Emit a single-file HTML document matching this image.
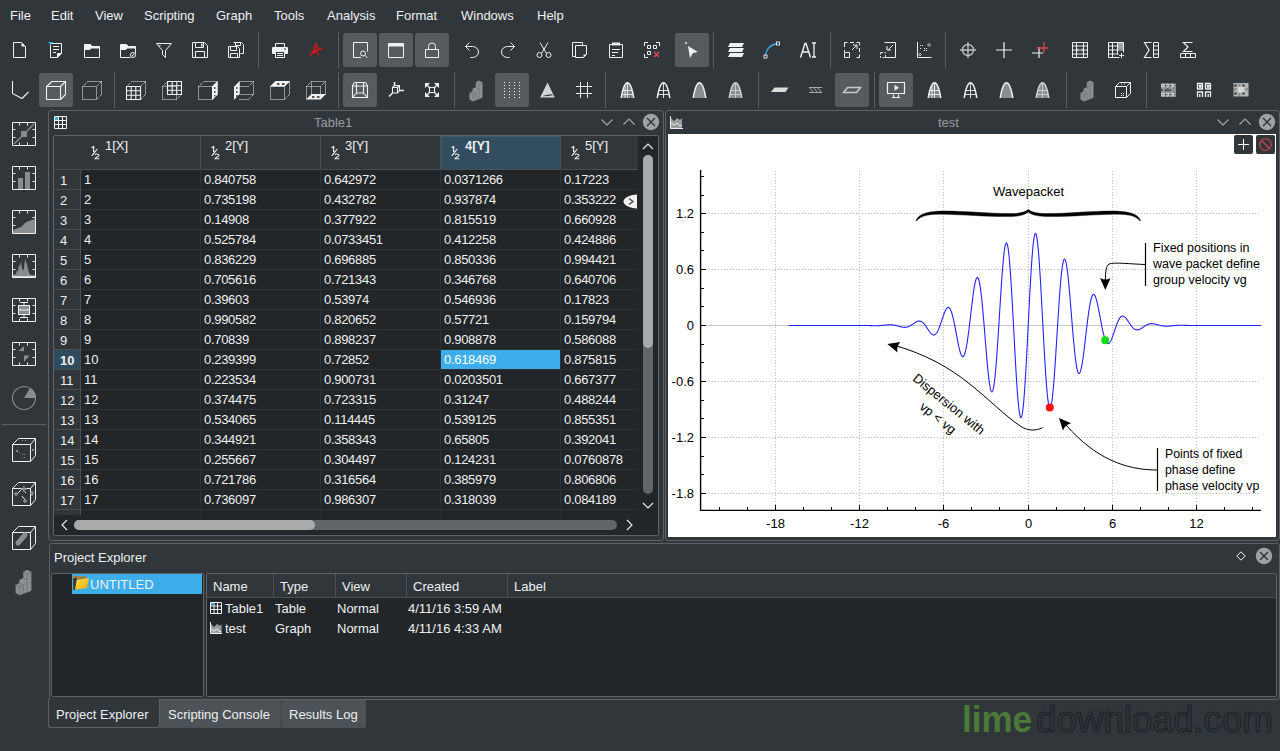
<!DOCTYPE html><html><head><meta charset="utf-8"><style>
*{box-sizing:border-box}
html,body{margin:0;padding:0}
body{width:1280px;height:751px;overflow:hidden;background:#31363b;font-family:"Liberation Sans",sans-serif;font-size:13px;color:#eff0f1;position:relative}
.abs{position:absolute}
.t{position:absolute;white-space:nowrap;line-height:15px}
svg{position:absolute;overflow:visible}
.chk{position:absolute;width:34px;height:34px;border-radius:3px;background:#575b5f}
.sep{position:absolute;width:1px;background:#5b5f63}
</style></head><body>
<div class="t" style="left:10px;top:8px">File</div><div class="t" style="left:51px;top:8px">Edit</div><div class="t" style="left:95px;top:8px">View</div><div class="t" style="left:144px;top:8px">Scripting</div><div class="t" style="left:216px;top:8px">Graph</div><div class="t" style="left:274px;top:8px">Tools</div><div class="t" style="left:327px;top:8px">Analysis</div><div class="t" style="left:396px;top:8px">Format</div><div class="t" style="left:461px;top:8px">Windows</div><div class="t" style="left:537px;top:8px">Help</div><div class="chk" style="left:343px;top:33px"></div><div class="chk" style="left:379px;top:33px"></div><div class="chk" style="left:415px;top:33px"></div><div class="chk" style="left:675px;top:33px"></div><div class="sep" style="left:258px;top:32px;height:36px"></div><div class="sep" style="left:338px;top:32px;height:36px"></div><div class="sep" style="left:713px;top:32px;height:36px"></div><div class="sep" style="left:830px;top:32px;height:36px"></div><div class="sep" style="left:945px;top:32px;height:36px"></div><svg style="left:12px;top:42px" width="16" height="16" viewBox="0 0 16 16"><path d="M1.5 0.5h8l4 4v11h-12z" fill="none" stroke="#eff0f1"/><path d="M9.5 0.5v4h4z" fill="#eff0f1"/></svg><svg style="left:48px;top:42px" width="16" height="16" viewBox="0 0 16 16"><path d="M2.5 1.5h11v10l-4 4h-7z" fill="none" stroke="#eff0f1"/><path d="M9.5 15.5v-4h4" fill="#eff0f1" stroke="#eff0f1"/><path d="M5 4.5h6M5 7.5h6M5 10.5h3" stroke="#eff0f1"/><path d="M0 0h5l-2.5 3z" fill="#3daee9"/></svg><svg style="left:84px;top:42px" width="16" height="16" viewBox="0 0 16 16"><path d="M0.5 2.5h6l2 2h7v11h-15z" fill="none" stroke="#eff0f1"/><path d="M0.5 2.5h6l2 2h7v2h-8l-2 1.5h-5z" fill="#eff0f1"/></svg><svg style="left:120px;top:42px" width="16" height="16" viewBox="0 0 16 16"><path d="M0.5 2.5h6l2 2h7v7M10.5 15.5h-10v-13" fill="none" stroke="#eff0f1"/><path d="M0.5 2.5h6l2 2h7v2h-8l-2 1.5h-5z" fill="#eff0f1"/><circle cx="13" cy="13" r="2.5" fill="none" stroke="#eff0f1"/><path d="M11.5 14.5l3-3" stroke="#eff0f1"/></svg><svg style="left:156px;top:42px" width="16" height="16" viewBox="0 0 16 16"><path d="M0.5 1.5h15l-6 7v7l-3-3v-4z" fill="none" stroke="#eff0f1"/><path d="M2 3h3l-1 1z" fill="#eff0f1"/></svg><svg style="left:192px;top:42px" width="16" height="16" viewBox="0 0 16 16"><path d="M0.5 0.5h12l3 3v12h-15z" fill="none" stroke="#eff0f1"/><path d="M3.5 0.5v5h8v-5M3.5 15.5v-6h9v6" fill="none" stroke="#eff0f1"/><path d="M9 1.5h1.5v3h-1.5z" fill="#eff0f1"/></svg><svg style="left:228px;top:42px" width="16" height="16" viewBox="0 0 16 16"><path d="M5.5 0.5h8l2 2v9h-3" fill="none" stroke="#eff0f1"/><path d="M0.5 4.5h9l2 2v9h-11z" fill="none" stroke="#eff0f1"/><path d="M2.5 4.5v4h6v-4M2.5 15.5v-4h7v4" fill="none" stroke="#eff0f1"/><path d="M7.5 0.5v3h5v-3" fill="none" stroke="#eff0f1"/></svg><svg style="left:272px;top:42px" width="16" height="16" viewBox="0 0 16 16"><path d="M3.5 1.5h9v4h-9z" fill="none" stroke="#eff0f1"/><path d="M0.5 5.5h15v6h-15z" fill="#eff0f1" stroke="#eff0f1"/><path d="M3.5 9.5h9v6h-9z" fill="#31363b" stroke="#eff0f1"/><path d="M5 11.5h6M5 13.5h6" stroke="#eff0f1"/><path d="M12 7h2" stroke="#31363b"/></svg><svg style="left:308px;top:42px" width="16" height="16" viewBox="0 0 16 16"><path d="M8 1c-1 3 0 6 -6 13M8 1c1 4 2 7 7 6M15 7c-5 0 -9 2 -13 7M6 6c1 3 3 5 5 7" fill="none" stroke="#c8171d" stroke-width="1.6"/></svg><svg style="left:352px;top:42px" width="16" height="16" viewBox="0 0 16 16"><path d="M8.5 15.5h-7.5v-15h14v9" fill="none" stroke="#eff0f1" transform="translate(0.5 0)"/><circle cx="11" cy="11.5" r="2.5" fill="none" stroke="#eff0f1"/><path d="M12.8 13.3l2.5 2.5" stroke="#eff0f1"/></svg><svg style="left:388px;top:42px" width="16" height="16" viewBox="0 0 16 16"><path d="M0.5 1.5h15v14h-15z" fill="none" stroke="#eff0f1"/><path d="M0.5 1.5h15v3h-15z" fill="#eff0f1"/></svg><svg style="left:424px;top:42px" width="16" height="16" viewBox="0 0 16 16"><path d="M1.5 7.5h13v8h-13z" fill="none" stroke="#eff0f1"/><path d="M4.5 7.5v-3a3.5 3.5 0 0 1 7 0v3" fill="none" stroke="#eff0f1"/></svg><svg style="left:464px;top:42px" width="16" height="16" viewBox="0 0 16 16"><path d="M5.5 0.5l-4 4 4 4" fill="none" stroke="#eff0f1"/><path d="M1.5 4.5h7a6 5.5 0 0 1 0 11h-2" fill="none" stroke="#eff0f1"/></svg><svg style="left:500px;top:42px" width="16" height="16" viewBox="0 0 16 16"><path d="M10.5 0.5l4 4-4 4" fill="none" stroke="#eff0f1"/><path d="M14.5 4.5h-7a6 5.5 0 0 0 0 11h2" fill="none" stroke="#eff0f1"/></svg><svg style="left:536px;top:42px" width="16" height="16" viewBox="0 0 16 16"><path d="M4 0.5l6.5 11M12 0.5l-6.5 11" fill="none" stroke="#eff0f1"/><circle cx="3.5" cy="13" r="2.5" fill="none" stroke="#eff0f1"/><circle cx="12.5" cy="13" r="2.5" fill="none" stroke="#eff0f1"/></svg><svg style="left:572px;top:42px" width="16" height="16" viewBox="0 0 16 16"><path d="M0.5 0.5h10v3M3.5 14.5h-3v-14" fill="none" stroke="#eff0f1"/><path d="M3.5 3.5h11v9l-3 3h-8z" fill="none" stroke="#eff0f1"/><path d="M11.5 15.5v-3h3z" fill="#eff0f1"/></svg><svg style="left:608px;top:42px" width="16" height="16" viewBox="0 0 16 16"><path d="M1.5 2.5h13v13h-13z" fill="none" stroke="#eff0f1"/><path d="M4 0.5h8v3h-8z" fill="#eff0f1"/><path d="M4 7.5h8M4 10.5h6M4 13.5h3" stroke="#eff0f1"/></svg><svg style="left:644px;top:42px" width="16" height="16" viewBox="0 0 16 16"><path d="M0.5 4v-3.5h3.5M12 0.5h3.5v3.5M0.5 12v3.5h3.5" fill="none" stroke="#eff0f1"/><path d="M3.5 3.5h3v3h-3zM9.5 3.5h3v3h-3zM3.5 9.5h3v3h-3z" fill="none" stroke="#eff0f1"/><path d="M10 10l5 5M15 10l-5 5" stroke="#da4453" stroke-width="1.5"/></svg><svg style="left:684px;top:42px" width="16" height="16" viewBox="0 0 16 16"><circle cx="2" cy="1" r="1" fill="#eff0f1"/><path d="M4 4l10 6-5 1-3 5z" fill="#eff0f1"/></svg><svg style="left:728px;top:42px" width="16" height="16" viewBox="0 0 16 16"><path d="M2 1h14l-2 4h-14zM2 6h14l-2 4h-14zM2 11h14l-2 4h-14z" fill="#eff0f1"/></svg><svg style="left:764px;top:42px" width="16" height="16" viewBox="0 0 16 16"><path d="M1.5 14.5c0-7 5-12 12-13" fill="none" stroke="#3daee9" stroke-width="1.3"/><rect x="0" y="13" width="3" height="3" fill="#31363b" stroke="#eff0f1" stroke-width="0.9"/><rect x="12.5" y="0" width="3" height="3" fill="#31363b" stroke="#eff0f1" stroke-width="0.9"/></svg><svg style="left:800px;top:42px" width="16" height="16" viewBox="0 0 16 16"><path d="M0.5 15.5l4.5-14h1l4.5 14M2.5 10h7" fill="none" stroke="#eff0f1" stroke-width="1.4"/><path d="M12 1h4M14 1v14M12 15h4" fill="none" stroke="#eff0f1" stroke-width="1.3"/></svg><svg style="left:844px;top:42px" width="16" height="16" viewBox="0 0 16 16"><path d="M0.5 5v-4.5h3M6 0.5h4M12.5 0.5h3v3M15.5 6v4M15.5 12.5v3h-3M0.5 8v2" fill="none" stroke="#eff0f1"/><path d="M0.5 10.5h5v5h-5z" fill="none" stroke="#eff0f1"/><path d="M8 8l5-5M9 3h4v4" fill="none" stroke="#eff0f1"/></svg><svg style="left:880px;top:42px" width="16" height="16" viewBox="0 0 16 16"><path d="M4.5 0.5h11v15h-11" fill="none" stroke="#eff0f1"/><path d="M0.5 10.5v5h5v-5z" fill="none" stroke="#eff0f1" stroke-dasharray="2 1.5"/><path d="M13 3l-5 5M7 4v4h4" fill="none" stroke="#eff0f1"/></svg><svg style="left:916px;top:42px" width="16" height="16" viewBox="0 0 16 16"><path d="M1.5 0v15.5h14" fill="none" stroke="#eff0f1"/><path d="M4 3h1v1h-1zM6 3h1v1h-1zM4 6h1v1h-1zM8 6h1v1h-1zM10 6h1v1h-1zM8 8h1v1h-1zM10 8h1v1h-1z" fill="#eff0f1"/><path d="M13 1.5l1.5 1.5-1.5 1.5-1.5-1.5zM4 11l1.5 1.5-1.5 1.5-1.5-1.5z" fill="none" stroke="#eff0f1" stroke-width="0.8"/></svg><svg style="left:960px;top:42px" width="16" height="16" viewBox="0 0 16 16"><circle cx="8" cy="8" r="5.5" fill="none" stroke="#bdbebf" stroke-width="1.4"/><path d="M8 0v16M0 8h16" stroke="#bdbebf" stroke-width="1.4"/></svg><svg style="left:996px;top:42px" width="16" height="16" viewBox="0 0 16 16"><path d="M8 0v16M0 8h16" stroke="#eff0f1" stroke-width="1.2"/></svg><svg style="left:1032px;top:42px" width="16" height="16" viewBox="0 0 16 16"><path d="M7 5v11M0 11h11" stroke="#eff0f1" stroke-width="1.2"/><path d="M12 0v11M5 6h11" stroke="#da4453" stroke-width="1.3"/></svg><svg style="left:1072px;top:42px" width="16" height="16" viewBox="0 0 16 16"><path d="M0.5 0.5h15v15h-15zM0.5 4h15M0.5 8h15M0.5 12h15M4.5 0.5v15M11.5 0.5v15" fill="none" stroke="#eff0f1"/><path d="M6 6.5l-1.5 1.5 1.5 1.5M10 6.5l1.5 1.5-1.5 1.5" fill="none" stroke="#eff0f1"/></svg><svg style="left:1108px;top:42px" width="16" height="16" viewBox="0 0 16 16"><path d="M11.5 15.5h-11v-15h15v10M0.5 4h15M0.5 8h15M0.5 12h10M4.5 0.5v15M9.5 0.5v12" fill="none" stroke="#eff0f1"/><path d="M10 1h5v6h-5z" fill="#a0a2a4"/><path d="M13.5 11v5M11 13.5h5" stroke="#eff0f1"/></svg><svg style="left:1144px;top:42px" width="16" height="16" viewBox="0 0 16 16"><path d="M7.5 0.5h-7l4.5 7.5-4.5 7.5h7" fill="none" stroke="#eff0f1" stroke-width="1.2"/><path d="M9.5 0.5h5v15h-5zM9.5 4h5M9.5 8h5M9.5 12h5" fill="none" stroke="#eff0f1"/></svg><svg style="left:1180px;top:42px" width="16" height="16" viewBox="0 0 16 16"><path d="M12.5 0.5h-9l4.5 4.5-4.5 4.5h9" fill="none" stroke="#eff0f1" stroke-width="1.2"/><path d="M0.5 11.5h15v4h-15zM5.5 11.5v4M10.5 11.5v4" fill="none" stroke="#eff0f1"/></svg><div class="chk" style="left:39px;top:73px"></div><div class="chk" style="left:343px;top:73px"></div><div class="chk" style="left:495px;top:73px"></div><div class="chk" style="left:835px;top:73px"></div><div class="chk" style="left:879px;top:73px"></div><div class="sep" style="left:114px;top:72px;height:36px"></div><div class="sep" style="left:338px;top:72px;height:36px"></div><div class="sep" style="left:454px;top:72px;height:36px"></div><div class="sep" style="left:605px;top:72px;height:36px"></div><div class="sep" style="left:758px;top:72px;height:36px"></div><div class="sep" style="left:874px;top:72px;height:36px"></div><div class="sep" style="left:1066px;top:72px;height:36px"></div><div class="sep" style="left:1146px;top:72px;height:36px"></div><svg style="left:10px;top:80px" width="20" height="20" viewBox="0 0 20 20"><path d="M2.5 1V13.5L12 18.5L18.5 12" fill="none" stroke="#eff0f1" stroke-width="1.1"/></svg><svg style="left:46px;top:80px" width="20" height="20" viewBox="0 0 20 20"><path d="M0.5 6.5h14v13h-14zM0.5 6.5l5.5-5h13.5l-5 5M19.5 1.5v13l-5 5" fill="none" stroke="#eff0f1" stroke-width="1.1" stroke-linejoin="round"/></svg><svg style="left:82px;top:80px" width="20" height="20" viewBox="0 0 20 20"><path d="M0.5 6.5h14v13h-14zM0.5 6.5l5.5-5h13.5l-5 5M19.5 1.5v13l-5 5" fill="none" stroke="#eff0f1" stroke-dasharray="1 1"/></svg><svg style="left:126px;top:80px" width="20" height="20" viewBox="0 0 20 20"><path d="M0.5 6.5h14v13h-14zM0.5 6.5l5.5-5h13.5l-5 5M19.5 1.5v13l-5 5" fill="none" stroke="#eff0f1" stroke-dasharray="1 1"/><path d="M0.5 6.5h14v13h-14zM0.5 10.8h14M0.5 15.2h14M5.2 6.5v13M9.8 6.5v13" fill="none" stroke="#eff0f1" stroke-width="1.1"/></svg><svg style="left:162px;top:80px" width="20" height="20" viewBox="0 0 20 20"><path d="M0.5 6.5h14v13h-14zM0.5 6.5l5-5M14.5 19.5l5-5" fill="none" stroke="#eff0f1" stroke-dasharray="1 1"/><path d="M5.5 1.5h14v13h-14zM5.5 5.8h14M5.5 10.2h14M10.2 1.5v13M14.8 1.5v13" fill="none" stroke="#eff0f1" stroke-width="1.1"/></svg><svg style="left:198px;top:80px" width="20" height="20" viewBox="0 0 20 20"><path d="M0.5 6.5h14v13h-14zM0.5 6.5l5.5-5h13.5l-5 5M19.5 1.5v13l-5 5" fill="none" stroke="#eff0f1" stroke-dasharray="1 1"/><path d="M14 6.5l5.5-5.5v13.5l-5.5 5.5z" fill="#eff0f1"/><path d="M16 7h1.5v2h-1.5zM16 11h1.5v2h-1.5zM16 15h1.5v1.5h-1.5z" fill="#555"/></svg><svg style="left:234px;top:80px" width="20" height="20" viewBox="0 0 20 20"><path d="M5.5 1.5h14v13h-14zM5.5 19.5h9l5-5M0.5 6.5h14l5-5" fill="none" stroke="#eff0f1" stroke-dasharray="1 1"/><path d="M0 7l5.5-6v13l-5.5 6z" fill="#eff0f1"/><path d="M2 7h1.5v2h-1.5zM2 11h1.5v2h-1.5zM2 15h1.5v2h-1.5z" fill="#555"/></svg><svg style="left:270px;top:80px" width="20" height="20" viewBox="0 0 20 20"><path d="M0.5 6.5h14v13h-14zM0.5 6.5l5.5-5h13.5l-5 5M19.5 1.5v13l-5 5" fill="none" stroke="#eff0f1" stroke-dasharray="1 1"/><path d="M0 6.5l5.5-5.5h14.5l-5.5 5.5z" fill="#eff0f1"/><path d="M7 3h2.5v2h-2.5zM12 3h2.5v2h-2.5z" fill="#555"/></svg><svg style="left:306px;top:80px" width="20" height="20" viewBox="0 0 20 20"><path d="M5.5 1.5h14v13h-14zM0.5 6.5v13M0.5 6.5l5-5M14.5 6.5l5-5M0.5 6.5h14v8" fill="none" stroke="#eff0f1" stroke-dasharray="1 1"/><path d="M0 19.5l5.5-5.5h14.5l-5.5 5.5z" fill="#eff0f1"/><path d="M6 16h2.5v2h-2.5zM11 16h2.5v2h-2.5z" fill="#555"/></svg><svg style="left:352px;top:82px" width="16" height="16" viewBox="0 0 16 16"><path d="M2.5 0.5h11l2 3.5v11.5h-15v-11.5z" fill="none" stroke="#eff0f1" stroke-width="1.1"/><path d="M0.5 4h15M4.5 0.5v10.5h7v-10.5M0.5 15.5l4-4.5M15.5 15.5l-4-4.5" fill="none" stroke="#eff0f1" stroke-width="1.1"/></svg><svg style="left:388px;top:82px" width="16" height="16" viewBox="0 0 16 16"><path d="M4.5 5.5l2-2h5v5l-2 2.5h-5z M4.5 5.5h5v5.5M9.5 5.5l2-2" fill="none" stroke="#eff0f1" stroke-width="1.1"/><path d="M6.5 3.5V0M11.5 8.5H16M4.5 11L1 14.5" stroke="#eff0f1" stroke-width="1.6"/></svg><svg style="left:424px;top:82px" width="16" height="16" viewBox="0 0 16 16"><path d="M5.5 5.5h5v5h-5z" fill="none" stroke="#eff0f1" stroke-width="1.2"/><path d="M1 1h5l-5 5zM15 1h-5l5 5zM1 15h5l-5-5zM15 15h-5l5-5z" fill="#eff0f1"/><path d="M1.5 1.5l4 4M14.5 1.5l-4 4M1.5 14.5l4-4M14.5 14.5l-4-4" stroke="#eff0f1" stroke-width="1.3"/></svg><svg style="left:469px;top:80px" width="14" height="21" viewBox="0 0 14 21"><path d="M0.5 13L3.5 11.3V8.8L6.8 7.2V2.3L10 0.5L13.5 2.3V17.8L4 21.5L0.5 19.5Z" fill="#8c8f92"/><path d="M0.5 13L4 14.5L7 13M3.5 11.3L7 12.8V19.5M6.8 7.2L10.2 8.8M6.8 2.3L10 4L13.5 2.3M10 4V18.5M4 14.5V21.5" fill="none" stroke="#72757a" stroke-width="0.8"/></svg><svg style="left:0;top:0" width="1" height="1" viewBox="0 0 1 1"><rect x="504" y="82" width="1" height="1" fill="#eff0f1"/><rect x="504" y="85" width="1" height="1" fill="#eff0f1"/><rect x="504" y="88" width="1" height="1" fill="#eff0f1"/><rect x="504" y="91" width="1" height="1" fill="#eff0f1"/><rect x="504" y="94" width="1" height="1" fill="#eff0f1"/><rect x="504" y="97" width="1" height="1" fill="#eff0f1"/><rect x="509" y="82" width="1" height="1" fill="#eff0f1"/><rect x="509" y="85" width="1" height="1" fill="#eff0f1"/><rect x="509" y="88" width="1" height="1" fill="#eff0f1"/><rect x="509" y="91" width="1" height="1" fill="#eff0f1"/><rect x="509" y="94" width="1" height="1" fill="#eff0f1"/><rect x="509" y="97" width="1" height="1" fill="#eff0f1"/><rect x="514" y="82" width="1" height="1" fill="#eff0f1"/><rect x="514" y="85" width="1" height="1" fill="#eff0f1"/><rect x="514" y="88" width="1" height="1" fill="#eff0f1"/><rect x="514" y="91" width="1" height="1" fill="#eff0f1"/><rect x="514" y="94" width="1" height="1" fill="#eff0f1"/><rect x="514" y="97" width="1" height="1" fill="#eff0f1"/><rect x="519" y="82" width="1" height="1" fill="#eff0f1"/><rect x="519" y="85" width="1" height="1" fill="#eff0f1"/><rect x="519" y="88" width="1" height="1" fill="#eff0f1"/><rect x="519" y="91" width="1" height="1" fill="#eff0f1"/><rect x="519" y="94" width="1" height="1" fill="#eff0f1"/><rect x="519" y="97" width="1" height="1" fill="#eff0f1"/></svg><svg style="left:540px;top:82px" width="16" height="16" viewBox="0 0 16 16"><path d="M7.5 0.5L14.8 15.5H0.2z" fill="#d3d6d9"/><path d="M3.2 13.8Q8 12.6 12.3 12.3L12.8 13.2Q8 14 3.2 14.2z" fill="#31363b"/></svg><svg style="left:576px;top:82px" width="16" height="16" viewBox="0 0 16 16"><path d="M4.5 0v16M11.5 0v16M0 4.5h16M0 11.5h16" stroke="#eff0f1" stroke-width="1"/></svg><svg style="left:620px;top:82px" width="16" height="16" viewBox="0 0 16 16"><path d="M1.2 16C2.5 8 4.8 0.7 7.5 0.7C10.2 0.7 12.5 8 13.8 16z" fill="#7d8083"/><path d="M5 4v12M7.5 0.7V16M3 8.5h9.5M2 12.5h11" stroke="#eff0f1" stroke-width="0.9"/><path d="M1.2 16C2.5 8 4.8 0.7 7.5 0.7C10.2 0.7 12.5 8 13.8 16" fill="none" stroke="#eff0f1" stroke-width="1.5"/></svg><svg style="left:656px;top:82px" width="16" height="16" viewBox="0 0 16 16"><path d="M7.5 0.7V16M3 8.5h9.5M2 12.5h11" stroke="#eff0f1" stroke-width="0.9"/><path d="M1.2 16C2.5 8 4.8 0.7 7.5 0.7C10.2 0.7 12.5 8 13.8 16" fill="none" stroke="#eff0f1" stroke-width="1.5"/></svg><svg style="left:692px;top:82px" width="16" height="16" viewBox="0 0 16 16"><path d="M1.2 16C2.5 8 4.8 0.7 7.5 0.7C10.2 0.7 12.5 8 13.8 16z" fill="#8a8d90"/><path d="M1.2 16C2.5 8 4.8 0.7 7.5 0.7C10.2 0.7 12.5 8 13.8 16" fill="none" stroke="#eff0f1" stroke-width="1.5"/></svg><svg style="left:728px;top:82px" width="16" height="16" viewBox="0 0 16 16"><path d="M1.2 16C2.5 8 4.8 0.7 7.5 0.7C10.2 0.7 12.5 8 13.8 16z" fill="#8a8d90"/><path d="M7.5 0.7V16M3 8.5h9.5M2 12.5h11" stroke="#d0d1d2" stroke-width="0.9"/><path d="M1.2 16C2.5 8 4.8 0.7 7.5 0.7C10.2 0.7 12.5 8 13.8 16" fill="none" stroke="#d0d1d2" stroke-width="1.5"/></svg><svg style="left:772px;top:82px" width="16" height="16" viewBox="0 0 16 16"><path d="M2.5 5.5H16.5L13.5 10H-1z" fill="#dcdddd"/></svg><svg style="left:808px;top:82px" width="16" height="16" viewBox="0 0 16 16"><path d="M1 5.5h13M1 10.5h13M1.5 5.5l4 5M5.5 5.5l4 5M9.5 5.5l4 5" fill="none" stroke="#a8aaac" stroke-width="1"/></svg><svg style="left:844px;top:82px" width="16" height="16" viewBox="0 0 16 16"><path d="M3.5 5.5H16.5L12.5 10.5H-0.5Z" fill="none" stroke="#c8c9ca" stroke-width="1.5"/></svg><svg style="left:888px;top:82px" width="16" height="16" viewBox="0 0 16 16"><path d="M-0.5 0.5h17v11h-17z" fill="none" stroke="#eff0f1" stroke-width="1.2"/><path d="M6.5 2.8v6l4.5-3z" fill="#eff0f1"/><path d="M5.5 12.5v2.5M10.5 12.5v2.5M4 15.5h8" stroke="#eff0f1" stroke-width="1.1"/></svg><svg style="left:927px;top:82px" width="16" height="16" viewBox="0 0 16 16"><path d="M1.2 16C2.5 8 4.8 0.7 7.5 0.7C10.2 0.7 12.5 8 13.8 16z" fill="#7d8083"/><path d="M5 4v12M7.5 0.7V16M3 8.5h9.5M2 12.5h11" stroke="#eff0f1" stroke-width="0.9"/><path d="M1.2 16C2.5 8 4.8 0.7 7.5 0.7C10.2 0.7 12.5 8 13.8 16" fill="none" stroke="#eff0f1" stroke-width="1.5"/></svg><svg style="left:963px;top:82px" width="16" height="16" viewBox="0 0 16 16"><path d="M7.5 0.7V16M3 8.5h9.5M2 12.5h11" stroke="#eff0f1" stroke-width="0.9"/><path d="M1.2 16C2.5 8 4.8 0.7 7.5 0.7C10.2 0.7 12.5 8 13.8 16" fill="none" stroke="#eff0f1" stroke-width="1.5"/></svg><svg style="left:999px;top:82px" width="16" height="16" viewBox="0 0 16 16"><path d="M1.2 16C2.5 8 4.8 0.7 7.5 0.7C10.2 0.7 12.5 8 13.8 16z" fill="#8a8d90"/><path d="M1.2 16C2.5 8 4.8 0.7 7.5 0.7C10.2 0.7 12.5 8 13.8 16" fill="none" stroke="#eff0f1" stroke-width="1.5"/></svg><svg style="left:1035px;top:82px" width="16" height="16" viewBox="0 0 16 16"><path d="M1.2 16C2.5 8 4.8 0.7 7.5 0.7C10.2 0.7 12.5 8 13.8 16z" fill="#8a8d90"/><path d="M7.5 0.7V16M3 8.5h9.5M2 12.5h11" stroke="#d0d1d2" stroke-width="0.9"/><path d="M1.2 16C2.5 8 4.8 0.7 7.5 0.7C10.2 0.7 12.5 8 13.8 16" fill="none" stroke="#d0d1d2" stroke-width="1.5"/></svg><svg style="left:1080px;top:80px" width="14" height="21" viewBox="0 0 14 21"><path d="M0.5 13L3.5 11.3V8.8L6.8 7.2V2.3L10 0.5L13.5 2.3V17.8L4 21.5L0.5 19.5Z" fill="#8c8f92"/><path d="M0.5 13L4 14.5L7 13M3.5 11.3L7 12.8V19.5M6.8 7.2L10.2 8.8M6.8 2.3L10 4L13.5 2.3M10 4V18.5M4 14.5V21.5" fill="none" stroke="#72757a" stroke-width="0.8"/></svg><svg style="left:1115px;top:82px" width="16" height="16" viewBox="0 0 16 16"><path d="M0.5 4.5h11v11h-11zM0.5 4.5l4-4h11l-4 4M15.5 0.5v11l-4 4" fill="none" stroke="#eff0f1"/><path d="M6 1.5h1v1h-1zM9 1.5h1v1h-1zM6 11h1v1h-1zM8 11h1v1h-1zM6 13h1v1h-1zM8 13h1v1h-1z" fill="#eff0f1"/></svg><svg style="left:1160px;top:82px" width="16" height="16" viewBox="0 0 16 16"><rect x="1" y="1.5" width="15" height="13.5" fill="#8c8e90"/><g fill="none" stroke="#d8d9da" stroke-width="1.1"><circle cx="3" cy="3.5" r="1.5"/><circle cx="7.5" cy="3.5" r="1.5"/><circle cx="12" cy="3.5" r="1.5"/><circle cx="3" cy="12.5" r="1.5"/><circle cx="7.5" cy="12.5" r="1.5"/><circle cx="12" cy="12.5" r="1.5"/></g><g fill="#1e2124"><rect x="5" y="3" width="1.3" height="1.3"/><rect x="9.5" y="3" width="1.3" height="1.3"/><rect x="1" y="7.5" width="1.3" height="1.3"/><rect x="5" y="7.5" width="1.3" height="1.3"/><rect x="9.5" y="7.5" width="1.3" height="1.3"/><rect x="5" y="12" width="1.3" height="1.3"/><rect x="9.5" y="12" width="1.3" height="1.3"/></g><circle cx="7.5" cy="8" r="1.8" fill="#55585b"/></svg><svg style="left:1196px;top:82px" width="16" height="16" viewBox="0 0 16 16"><g fill="none" stroke="#eff0f1" stroke-width="1.3"><path d="M1.5 7V1.5H6.5V7H1.5zM9.5 7V1.5H14.5"/><path d="M14.5 1.5V7H9.5"/><path d="M3.5 3.5h1.5v1.5h-1.5zM11.5 3.5h1.5v1.5h-1.5z"/><path d="M1.5 15V10H6.5V15M9.5 15V10H14.5V15M3.8 15v-3M12.2 15v-3"/></g></svg><svg style="left:1233px;top:82px" width="16" height="16" viewBox="0 0 16 16"><rect x="0.5" y="1" width="15" height="13.5" fill="#b4b5b6"/><rect x="5" y="5" width="6" height="5.5" fill="#d5d6d6"/><g fill="#222528"><rect x="1.5" y="2.5" width="2" height="2"/><rect x="9.5" y="2.5" width="2" height="2"/><rect x="1.5" y="10.5" width="2" height="2"/><rect x="9.5" y="10.5" width="2" height="2"/></g><g fill="#8a8c8e"><rect x="5" y="2" width="2.5" height="2.5"/><rect x="12.5" y="6" width="2.5" height="2.5"/><rect x="5" y="11" width="2.5" height="2.5"/><rect x="1" y="6" width="2.5" height="2.5"/></g></svg><svg style="left:12px;top:122px" width="24" height="24" viewBox="0 0 24 24"><path d="M0.5 0.5h23v23h-23z" fill="none" stroke="#eff0f1"/><path d="M7.5 1v2.5M15.5 1v2.5M7.5 23v-2.5M15.5 23v-2.5M1 7.5h2.5M1 15.5h2.5M23 7.5h-2.5M23 15.5h-2.5" stroke="#eff0f1"/><path d="M2 22L22 2" stroke="#8a8d90" stroke-width="1.2"/><rect x="9" y="9" width="6" height="6" fill="#8a8d90"/></svg><svg style="left:12px;top:166px" width="24" height="24" viewBox="0 0 24 24"><path d="M0.5 0.5h23v23h-23z" fill="none" stroke="#eff0f1"/><path d="M7.5 1v2.5M15.5 1v2.5M7.5 23v-2.5M15.5 23v-2.5M1 7.5h2.5M1 15.5h2.5M23 7.5h-2.5M23 15.5h-2.5" stroke="#eff0f1"/><rect x="6" y="12" width="5" height="11" fill="#8a8d90"/><rect x="13" y="6" width="5" height="17" fill="#8a8d90"/></svg><svg style="left:12px;top:210px" width="24" height="24" viewBox="0 0 24 24"><path d="M0.5 0.5h23v23h-23z" fill="none" stroke="#eff0f1"/><path d="M7.5 1v2.5M15.5 1v2.5M7.5 23v-2.5M15.5 23v-2.5M1 7.5h2.5M1 15.5h2.5M23 7.5h-2.5M23 15.5h-2.5" stroke="#eff0f1"/><path d="M1 23v-3l8-3 5-5 9-3v14z" fill="#8a8d90"/></svg><svg style="left:12px;top:254px" width="24" height="24" viewBox="0 0 24 24"><path d="M0.5 0.5h23v23h-23z" fill="none" stroke="#eff0f1"/><path d="M7.5 1v2.5M15.5 1v2.5M7.5 23v-2.5M15.5 23v-2.5M1 7.5h2.5M1 15.5h2.5M23 7.5h-2.5M23 15.5h-2.5" stroke="#eff0f1"/><path d="M1 23V21L4 20L5 16L6 18L7 10L8 13L9 7L10 14L11 17L12 14L13 4.5L14 8L15 10L16 15L17 19L19 21L23 21.5V23z" fill="#8a8d90"/><path d="M0.5 23h23" stroke="#eff0f1" stroke-width="1.5"/></svg><svg style="left:12px;top:298px" width="24" height="24" viewBox="0 0 24 24"><path d="M0.5 0.5h23v23h-23z" fill="none" stroke="#eff0f1"/><path d="M7.5 1v2.5M15.5 1v2.5M7.5 23v-2.5M15.5 23v-2.5M1 7.5h2.5M1 15.5h2.5M23 7.5h-2.5M23 15.5h-2.5" stroke="#eff0f1"/><path d="M8 4.5h8M12 4.5v3M8 19.5h8M12 16.5v3" stroke="#eff0f1"/><rect x="6.5" y="7.5" width="11" height="9" fill="#8a8d90" stroke="#eff0f1"/><path d="M6.5 12h11" stroke="#eff0f1"/></svg><svg style="left:12px;top:342px" width="24" height="24" viewBox="0 0 24 24"><path d="M0.5 0.5h23v23h-23z" fill="none" stroke="#eff0f1"/><path d="M7.5 1v2.5M15.5 1v2.5M7.5 23v-2.5M15.5 23v-2.5M1 7.5h2.5M1 15.5h2.5M23 7.5h-2.5M23 15.5h-2.5" stroke="#eff0f1"/><path d="M6.4 9L12 4.2V9.3z" fill="#8a8d90"/><path d="M12 13.6H17.6L12 20z" fill="#8a8d90"/></svg><svg style="left:12px;top:386px" width="24" height="24" viewBox="0 0 24 24"><circle cx="12" cy="12" r="11.5" fill="none" stroke="#8a8d90" stroke-width="1.1"/><path d="M12 12l6-10a11.5 11.5 0 0 1 5.5 10z" fill="#8a8d90"/></svg><svg style="left:12px;top:438px" width="24" height="24" viewBox="0 0 24 24"><path d="M0.5 6.5h18v17h-18zM0.5 6.5l6-6h17l-5 6M23.5 0.5v17l-5 6" fill="none" stroke="#eff0f1"/><path d="M10 2h1v1h-1zM13 2h1v1h-1zM4 12h2v2h-2zM7 14h1v1h-1zM10 16h1v1h-1zM12 16h1v1h-1zM10 19h1v1h-1zM12 19h1v1h-1zM20 11h2v2h-2z" fill="#8a8d90"/></svg><svg style="left:12px;top:482px" width="24" height="24" viewBox="0 0 24 24"><path d="M0.5 6.5h18v17h-18zM0.5 6.5l6-6h17l-5 6M23.5 0.5v17l-5 6" fill="none" stroke="#eff0f1"/><path d="M5 12l5-5 4 4M10 14l4 5" fill="none" stroke="#eff0f1" stroke-width="1"/><path d="M12 4v6M9 7h6M4 10v4M2 12h4M13 17v4M11 19h4M20 9v5M18 11h4" stroke="#8a8d90" stroke-width="1.5"/></svg><svg style="left:12px;top:526px" width="24" height="24" viewBox="0 0 24 24"><path d="M0.5 6.5h18v17h-18zM0.5 6.5l6-6h17l-5 6M23.5 0.5v17l-5 6" fill="none" stroke="#eff0f1"/><path d="M6 17l7-8" stroke="#8a8d90" stroke-width="5" stroke-linecap="round"/></svg><svg style="left:15px;top:569px" width="17" height="26" viewBox="0 0 14 21"><path d="M0.5 13L3.5 11.3V8.8L6.8 7.2V2.3L10 0.5L13.5 2.3V17.8L4 21.5L0.5 19.5Z" fill="#8c8f92"/><path d="M0.5 13L4 14.5L7 13M3.5 11.3L7 12.8V19.5M6.8 7.2L10.2 8.8M6.8 2.3L10 4L13.5 2.3M10 4V18.5M4 14.5V21.5" fill="none" stroke="#72757a" stroke-width="0.8"/></svg><div class="abs" style="left:2px;top:424px;width:44px;height:1px;background:#5b5f63"></div><div class="abs" style="left:48px;top:110px;width:616px;height:431px;border:1px solid #5e6266;border-radius:3px;background:#31363b"></div><svg style="left:54px;top:116px" width="13" height="13" viewBox="0 0 13 13"><path d="M0.5 0.5h12v12h-12zM0.5 4.5h12M0.5 8.5h12M4.5 0.5v12M8.5 0.5v12" fill="none" stroke="#eff0f1"/><rect x="1" y="1" width="3" height="3" fill="#3daee9"/></svg><div class="t" style="left:314px;top:115px;color:#9a9da0">Table1</div><svg style="left:601px;top:119px" width="12" height="7" viewBox="0 0 12 7"><path d="M0.5 0.5l5.5 5.5 5.5-5.5" fill="none" stroke="#a8aaac" stroke-width="1.1"/></svg><svg style="left:623px;top:118px" width="12" height="7" viewBox="0 0 12 7"><path d="M0.5 6.5l5.5-5.5 5.5 5.5" fill="none" stroke="#a8aaac" stroke-width="1.1"/></svg><svg style="left:642px;top:113px" width="18" height="18" viewBox="0 0 18 18"><circle cx="9" cy="9" r="8.2" fill="#9fa1a3"/><path d="M5 5l8 8M13 5l-8 8" stroke="#2a2e32" stroke-width="1.2"/></svg><div class="abs" style="left:665px;top:110px;width:615px;height:431px;border:1px solid #5e6266;border-radius:3px;background:#31363b"></div><svg style="left:670px;top:116px" width="13" height="13" viewBox="0 0 13 13"><path d="M1 2l3 3 3-3 3 2 2-2v10h-11z" fill="#9a9c9e"/><path d="M1 7l3 2 3-2 3 3 2-1" fill="none" stroke="#eff0f1"/><path d="M0.5 0v12.5h12.5" fill="none" stroke="#eff0f1"/></svg><div class="t" style="left:938px;top:115px;color:#9a9da0">test</div><svg style="left:1217px;top:119px" width="12" height="7" viewBox="0 0 12 7"><path d="M0.5 0.5l5.5 5.5 5.5-5.5" fill="none" stroke="#a8aaac" stroke-width="1.1"/></svg><svg style="left:1239px;top:118px" width="12" height="7" viewBox="0 0 12 7"><path d="M0.5 6.5l5.5-5.5 5.5 5.5" fill="none" stroke="#a8aaac" stroke-width="1.1"/></svg><svg style="left:1258px;top:113px" width="18" height="18" viewBox="0 0 18 18"><circle cx="9" cy="9" r="8.2" fill="#9fa1a3"/><path d="M5 5l8 8M13 5l-8 8" stroke="#2a2e32" stroke-width="1.2"/></svg><div class="abs" style="left:53px;top:135px;width:606px;height:401px;border:1px solid #5e6266;border-radius:2px;background:#232629;overflow:hidden"><div class="abs" style="left:0;top:0;width:584px;height:33px;background:#31363b"></div><div class="abs" style="left:0;top:33px;width:26px;height:346px;background:#31363b"></div><div class="abs" style="left:387px;top:0;width:120px;height:33px;background:#324d60;border:1px solid #3e5a6d;border-bottom:none"></div><svg style="left:36.5px;top:10px" width="10" height="14" viewBox="0 0 10 14"><path d="M0.6 1.6L2.6 0.6V6" fill="none" stroke="#eff0f1" stroke-width="1.2"/><path d="M0.8 9.8L6.2 3" stroke="#eff0f1" stroke-width="1.2"/><path d="M4 9c0.3-1.3 4-1.3 4 0.4 0 1.2-4 2.2-4 3.4h4.3" fill="none" stroke="#eff0f1" stroke-width="1.1"/></svg><div class="t" style="left:51px;top:2px;">1[X]</div><svg style="left:156.5px;top:10px" width="10" height="14" viewBox="0 0 10 14"><path d="M0.6 1.6L2.6 0.6V6" fill="none" stroke="#eff0f1" stroke-width="1.2"/><path d="M0.8 9.8L6.2 3" stroke="#eff0f1" stroke-width="1.2"/><path d="M4 9c0.3-1.3 4-1.3 4 0.4 0 1.2-4 2.2-4 3.4h4.3" fill="none" stroke="#eff0f1" stroke-width="1.1"/></svg><div class="t" style="left:171px;top:2px;">2[Y]</div><div class="abs" style="left:146px;top:0;width:1px;height:33px;background:#4a4f54"></div><svg style="left:276.5px;top:10px" width="10" height="14" viewBox="0 0 10 14"><path d="M0.6 1.6L2.6 0.6V6" fill="none" stroke="#eff0f1" stroke-width="1.2"/><path d="M0.8 9.8L6.2 3" stroke="#eff0f1" stroke-width="1.2"/><path d="M4 9c0.3-1.3 4-1.3 4 0.4 0 1.2-4 2.2-4 3.4h4.3" fill="none" stroke="#eff0f1" stroke-width="1.1"/></svg><div class="t" style="left:291px;top:2px;">3[Y]</div><div class="abs" style="left:266px;top:0;width:1px;height:33px;background:#4a4f54"></div><svg style="left:396.5px;top:10px" width="10" height="14" viewBox="0 0 10 14"><path d="M0.6 1.6L2.6 0.6V6" fill="none" stroke="#eff0f1" stroke-width="1.2"/><path d="M0.8 9.8L6.2 3" stroke="#eff0f1" stroke-width="1.2"/><path d="M4 9c0.3-1.3 4-1.3 4 0.4 0 1.2-4 2.2-4 3.4h4.3" fill="none" stroke="#eff0f1" stroke-width="1.1"/></svg><div class="t" style="left:411px;top:2px;font-weight:bold;">4[Y]</div><div class="abs" style="left:386px;top:0;width:1px;height:33px;background:#4a4f54"></div><svg style="left:516.5px;top:10px" width="10" height="14" viewBox="0 0 10 14"><path d="M0.6 1.6L2.6 0.6V6" fill="none" stroke="#eff0f1" stroke-width="1.2"/><path d="M0.8 9.8L6.2 3" stroke="#eff0f1" stroke-width="1.2"/><path d="M4 9c0.3-1.3 4-1.3 4 0.4 0 1.2-4 2.2-4 3.4h4.3" fill="none" stroke="#eff0f1" stroke-width="1.1"/></svg><div class="t" style="left:531px;top:2px;">5[Y]</div><div class="abs" style="left:506px;top:0;width:1px;height:33px;background:#4a4f54"></div><div class="abs" style="left:0;top:33px;width:584px;height:1px;background:#4a4f54"></div><div class="abs" style="left:0;top:214px;width:26px;height:19px;background:#2f4b5e"></div><div class="abs" style="left:387px;top:214px;width:119px;height:19px;background:#3daee9"></div><div class="abs" style="left:0;top:53px;width:584px;height:1px;background:#2e3236"></div><div class="t" style="left:6px;top:37px;">1</div><div class="abs" style="left:0;top:53px;width:26px;height:1px;background:#4a4f54"></div><div class="t" style="left:30px;top:36px">1</div><div class="t" style="left:150px;top:36px;letter-spacing:-0.3px;">0.840758</div><div class="t" style="left:270px;top:36px;letter-spacing:-0.3px;">0.642972</div><div class="t" style="left:390px;top:36px;letter-spacing:-0.3px;">0.0371266</div><div class="t" style="left:510px;top:36px;letter-spacing:-0.3px;">0.17223</div><div class="abs" style="left:0;top:73px;width:584px;height:1px;background:#2e3236"></div><div class="t" style="left:6px;top:57px;">2</div><div class="abs" style="left:0;top:73px;width:26px;height:1px;background:#4a4f54"></div><div class="t" style="left:30px;top:56px">2</div><div class="t" style="left:150px;top:56px;letter-spacing:-0.3px;">0.735198</div><div class="t" style="left:270px;top:56px;letter-spacing:-0.3px;">0.432782</div><div class="t" style="left:390px;top:56px;letter-spacing:-0.3px;">0.937874</div><div class="t" style="left:510px;top:56px;letter-spacing:-0.3px;">0.353222</div><div class="abs" style="left:0;top:93px;width:584px;height:1px;background:#2e3236"></div><div class="t" style="left:6px;top:77px;">3</div><div class="abs" style="left:0;top:93px;width:26px;height:1px;background:#4a4f54"></div><div class="t" style="left:30px;top:76px">3</div><div class="t" style="left:150px;top:76px;letter-spacing:-0.3px;">0.14908</div><div class="t" style="left:270px;top:76px;letter-spacing:-0.3px;">0.377922</div><div class="t" style="left:390px;top:76px;letter-spacing:-0.3px;">0.815519</div><div class="t" style="left:510px;top:76px;letter-spacing:-0.3px;">0.660928</div><div class="abs" style="left:0;top:113px;width:584px;height:1px;background:#2e3236"></div><div class="t" style="left:6px;top:97px;">4</div><div class="abs" style="left:0;top:113px;width:26px;height:1px;background:#4a4f54"></div><div class="t" style="left:30px;top:96px">4</div><div class="t" style="left:150px;top:96px;letter-spacing:-0.3px;">0.525784</div><div class="t" style="left:270px;top:96px;letter-spacing:-0.3px;">0.0733451</div><div class="t" style="left:390px;top:96px;letter-spacing:-0.3px;">0.412258</div><div class="t" style="left:510px;top:96px;letter-spacing:-0.3px;">0.424886</div><div class="abs" style="left:0;top:133px;width:584px;height:1px;background:#2e3236"></div><div class="t" style="left:6px;top:117px;">5</div><div class="abs" style="left:0;top:133px;width:26px;height:1px;background:#4a4f54"></div><div class="t" style="left:30px;top:116px">5</div><div class="t" style="left:150px;top:116px;letter-spacing:-0.3px;">0.836229</div><div class="t" style="left:270px;top:116px;letter-spacing:-0.3px;">0.696885</div><div class="t" style="left:390px;top:116px;letter-spacing:-0.3px;">0.850336</div><div class="t" style="left:510px;top:116px;letter-spacing:-0.3px;">0.994421</div><div class="abs" style="left:0;top:153px;width:584px;height:1px;background:#2e3236"></div><div class="t" style="left:6px;top:137px;">6</div><div class="abs" style="left:0;top:153px;width:26px;height:1px;background:#4a4f54"></div><div class="t" style="left:30px;top:136px">6</div><div class="t" style="left:150px;top:136px;letter-spacing:-0.3px;">0.705616</div><div class="t" style="left:270px;top:136px;letter-spacing:-0.3px;">0.721343</div><div class="t" style="left:390px;top:136px;letter-spacing:-0.3px;">0.346768</div><div class="t" style="left:510px;top:136px;letter-spacing:-0.3px;">0.640706</div><div class="abs" style="left:0;top:173px;width:584px;height:1px;background:#2e3236"></div><div class="t" style="left:6px;top:157px;">7</div><div class="abs" style="left:0;top:173px;width:26px;height:1px;background:#4a4f54"></div><div class="t" style="left:30px;top:156px">7</div><div class="t" style="left:150px;top:156px;letter-spacing:-0.3px;">0.39603</div><div class="t" style="left:270px;top:156px;letter-spacing:-0.3px;">0.53974</div><div class="t" style="left:390px;top:156px;letter-spacing:-0.3px;">0.546936</div><div class="t" style="left:510px;top:156px;letter-spacing:-0.3px;">0.17823</div><div class="abs" style="left:0;top:193px;width:584px;height:1px;background:#2e3236"></div><div class="t" style="left:6px;top:177px;">8</div><div class="abs" style="left:0;top:193px;width:26px;height:1px;background:#4a4f54"></div><div class="t" style="left:30px;top:176px">8</div><div class="t" style="left:150px;top:176px;letter-spacing:-0.3px;">0.990582</div><div class="t" style="left:270px;top:176px;letter-spacing:-0.3px;">0.820652</div><div class="t" style="left:390px;top:176px;letter-spacing:-0.3px;">0.57721</div><div class="t" style="left:510px;top:176px;letter-spacing:-0.3px;">0.159794</div><div class="abs" style="left:0;top:213px;width:584px;height:1px;background:#2e3236"></div><div class="t" style="left:6px;top:197px;">9</div><div class="abs" style="left:0;top:213px;width:26px;height:1px;background:#4a4f54"></div><div class="t" style="left:30px;top:196px">9</div><div class="t" style="left:150px;top:196px;letter-spacing:-0.3px;">0.70839</div><div class="t" style="left:270px;top:196px;letter-spacing:-0.3px;">0.898237</div><div class="t" style="left:390px;top:196px;letter-spacing:-0.3px;">0.908878</div><div class="t" style="left:510px;top:196px;letter-spacing:-0.3px;">0.586088</div><div class="abs" style="left:0;top:233px;width:584px;height:1px;background:#2e3236"></div><div class="t" style="left:6px;top:217px;font-weight:bold;">10</div><div class="abs" style="left:0;top:233px;width:26px;height:1px;background:#4a4f54"></div><div class="t" style="left:30px;top:216px">10</div><div class="t" style="left:150px;top:216px;letter-spacing:-0.3px;">0.239399</div><div class="t" style="left:270px;top:216px;letter-spacing:-0.3px;">0.72852</div><div class="t" style="left:390px;top:216px;letter-spacing:-0.3px;color:#fff;">0.618469</div><div class="t" style="left:510px;top:216px;letter-spacing:-0.3px;">0.875815</div><div class="abs" style="left:0;top:253px;width:584px;height:1px;background:#2e3236"></div><div class="t" style="left:6px;top:237px;">11</div><div class="abs" style="left:0;top:253px;width:26px;height:1px;background:#4a4f54"></div><div class="t" style="left:30px;top:236px">11</div><div class="t" style="left:150px;top:236px;letter-spacing:-0.3px;">0.223534</div><div class="t" style="left:270px;top:236px;letter-spacing:-0.3px;">0.900731</div><div class="t" style="left:390px;top:236px;letter-spacing:-0.3px;">0.0203501</div><div class="t" style="left:510px;top:236px;letter-spacing:-0.3px;">0.667377</div><div class="abs" style="left:0;top:273px;width:584px;height:1px;background:#2e3236"></div><div class="t" style="left:6px;top:257px;">12</div><div class="abs" style="left:0;top:273px;width:26px;height:1px;background:#4a4f54"></div><div class="t" style="left:30px;top:256px">12</div><div class="t" style="left:150px;top:256px;letter-spacing:-0.3px;">0.374475</div><div class="t" style="left:270px;top:256px;letter-spacing:-0.3px;">0.723315</div><div class="t" style="left:390px;top:256px;letter-spacing:-0.3px;">0.31247</div><div class="t" style="left:510px;top:256px;letter-spacing:-0.3px;">0.488244</div><div class="abs" style="left:0;top:293px;width:584px;height:1px;background:#2e3236"></div><div class="t" style="left:6px;top:277px;">13</div><div class="abs" style="left:0;top:293px;width:26px;height:1px;background:#4a4f54"></div><div class="t" style="left:30px;top:276px">13</div><div class="t" style="left:150px;top:276px;letter-spacing:-0.3px;">0.534065</div><div class="t" style="left:270px;top:276px;letter-spacing:-0.3px;">0.114445</div><div class="t" style="left:390px;top:276px;letter-spacing:-0.3px;">0.539125</div><div class="t" style="left:510px;top:276px;letter-spacing:-0.3px;">0.855351</div><div class="abs" style="left:0;top:313px;width:584px;height:1px;background:#2e3236"></div><div class="t" style="left:6px;top:297px;">14</div><div class="abs" style="left:0;top:313px;width:26px;height:1px;background:#4a4f54"></div><div class="t" style="left:30px;top:296px">14</div><div class="t" style="left:150px;top:296px;letter-spacing:-0.3px;">0.344921</div><div class="t" style="left:270px;top:296px;letter-spacing:-0.3px;">0.358343</div><div class="t" style="left:390px;top:296px;letter-spacing:-0.3px;">0.65805</div><div class="t" style="left:510px;top:296px;letter-spacing:-0.3px;">0.392041</div><div class="abs" style="left:0;top:333px;width:584px;height:1px;background:#2e3236"></div><div class="t" style="left:6px;top:317px;">15</div><div class="abs" style="left:0;top:333px;width:26px;height:1px;background:#4a4f54"></div><div class="t" style="left:30px;top:316px">15</div><div class="t" style="left:150px;top:316px;letter-spacing:-0.3px;">0.255667</div><div class="t" style="left:270px;top:316px;letter-spacing:-0.3px;">0.304497</div><div class="t" style="left:390px;top:316px;letter-spacing:-0.3px;">0.124231</div><div class="t" style="left:510px;top:316px;letter-spacing:-0.3px;">0.0760878</div><div class="abs" style="left:0;top:353px;width:584px;height:1px;background:#2e3236"></div><div class="t" style="left:6px;top:337px;">16</div><div class="abs" style="left:0;top:353px;width:26px;height:1px;background:#4a4f54"></div><div class="t" style="left:30px;top:336px">16</div><div class="t" style="left:150px;top:336px;letter-spacing:-0.3px;">0.721786</div><div class="t" style="left:270px;top:336px;letter-spacing:-0.3px;">0.316564</div><div class="t" style="left:390px;top:336px;letter-spacing:-0.3px;">0.385979</div><div class="t" style="left:510px;top:336px;letter-spacing:-0.3px;">0.806806</div><div class="abs" style="left:0;top:373px;width:584px;height:1px;background:#2e3236"></div><div class="t" style="left:6px;top:357px;">17</div><div class="abs" style="left:0;top:373px;width:26px;height:1px;background:#4a4f54"></div><div class="t" style="left:30px;top:356px">17</div><div class="t" style="left:150px;top:356px;letter-spacing:-0.3px;">0.736097</div><div class="t" style="left:270px;top:356px;letter-spacing:-0.3px;">0.986307</div><div class="t" style="left:390px;top:356px;letter-spacing:-0.3px;">0.318039</div><div class="t" style="left:510px;top:356px;letter-spacing:-0.3px;">0.084189</div><div class="abs" style="left:146px;top:33px;width:1px;height:346px;background:#2e3236"></div><div class="abs" style="left:266px;top:33px;width:1px;height:346px;background:#2e3236"></div><div class="abs" style="left:386px;top:33px;width:1px;height:346px;background:#2e3236"></div><div class="abs" style="left:506px;top:33px;width:1px;height:346px;background:#2e3236"></div><div class="abs" style="left:26px;top:33px;width:1px;height:346px;background:#4a4f54"></div><svg style="left:569px;top:58px" width="15" height="15" viewBox="0 0 15 15"><path d="M14 0.5v14c-6 0-13.5-3-13.5-7s7.5-7 13.5-7z" fill="#f0f0f0"/><path d="M6 4.5l4 3-4 3" fill="none" stroke="#3a3d40" stroke-width="1.2"/></svg><div class="abs" style="left:589px;top:19px;width:10px;height:339px;border-radius:5px;background:#626669"></div><div class="abs" style="left:589px;top:19px;width:10px;height:193px;border-radius:5px;background:#a9aaab"></div><svg style="left:588px;top:7px" width="12" height="7" viewBox="0 0 12 7"><path d="M1 6l5-5 5 5" fill="none" stroke="#eff0f1" stroke-width="1.1"/></svg><svg style="left:588px;top:366px" width="12" height="7" viewBox="0 0 12 7"><path d="M1 1l5 5 5-5" fill="none" stroke="#eff0f1" stroke-width="1.1"/></svg><div class="abs" style="left:20px;top:384px;width:543px;height:10px;border-radius:5px;background:#626669"></div><div class="abs" style="left:20px;top:384px;width:241px;height:10px;border-radius:5px;background:#a9aaab"></div><svg style="left:7px;top:383px" width="7" height="12" viewBox="0 0 7 12"><path d="M6 1l-5 5 5 5" fill="none" stroke="#eff0f1" stroke-width="1.1"/></svg><svg style="left:572px;top:383px" width="7" height="12" viewBox="0 0 7 12"><path d="M1 1l5 5-5 5" fill="none" stroke="#eff0f1" stroke-width="1.1"/></svg></div><div class="abs" style="left:668px;top:134px;width:608px;height:403px;background:#fff"></div><svg style="left:668px;top:134px" width="608" height="403" viewBox="668 134 608 403" font-family="Liberation Sans" font-size="13"><path d="M775.5 171V505" stroke="#bdbdbd" stroke-width="1" stroke-dasharray="1 2"/><path d="M859.5 171V505" stroke="#bdbdbd" stroke-width="1" stroke-dasharray="1 2"/><path d="M943.5 171V505" stroke="#bdbdbd" stroke-width="1" stroke-dasharray="1 2"/><path d="M1028.5 171V505" stroke="#bdbdbd" stroke-width="1" stroke-dasharray="1 2"/><path d="M1112.5 171V505" stroke="#bdbdbd" stroke-width="1" stroke-dasharray="1 2"/><path d="M1196.5 171V505" stroke="#bdbdbd" stroke-width="1" stroke-dasharray="1 2"/><path d="M706 493.5H1261" stroke="#bdbdbd" stroke-width="1" stroke-dasharray="1 2"/><path d="M706 437.5H1261" stroke="#bdbdbd" stroke-width="1" stroke-dasharray="1 2"/><path d="M706 381.5H1261" stroke="#bdbdbd" stroke-width="1" stroke-dasharray="1 2"/><path d="M706 269.5H1261" stroke="#bdbdbd" stroke-width="1" stroke-dasharray="1 2"/><path d="M706 213.5H1261" stroke="#bdbdbd" stroke-width="1" stroke-dasharray="1 2"/><path d="M702 325.5H1261" stroke="#c4c4c4" stroke-width="1"/><path d="M700.6 170V511" stroke="#000" stroke-width="1.4"/><path d="M700 510.4H1261" stroke="#000" stroke-width="1.4"/><path d="M701 176.5H704" stroke="#000" stroke-width="1"/><path d="M701 195.5H704" stroke="#000" stroke-width="1"/><path d="M701 213.5H706" stroke="#000" stroke-width="1"/><path d="M701 232.5H704" stroke="#000" stroke-width="1"/><path d="M701 250.5H704" stroke="#000" stroke-width="1"/><path d="M701 269.5H706" stroke="#000" stroke-width="1"/><path d="M701 288.5H704" stroke="#000" stroke-width="1"/><path d="M701 306.5H704" stroke="#000" stroke-width="1"/><path d="M701 325.5H706" stroke="#000" stroke-width="1"/><path d="M701 344.5H704" stroke="#000" stroke-width="1"/><path d="M701 362.5H704" stroke="#000" stroke-width="1"/><path d="M701 381.5H706" stroke="#000" stroke-width="1"/><path d="M701 400.5H704" stroke="#000" stroke-width="1"/><path d="M701 418.5H704" stroke="#000" stroke-width="1"/><path d="M701 437.5H706" stroke="#000" stroke-width="1"/><path d="M701 456.5H704" stroke="#000" stroke-width="1"/><path d="M701 474.5H704" stroke="#000" stroke-width="1"/><path d="M701 493.5H706" stroke="#000" stroke-width="1"/><path d="M719.5 510V507" stroke="#000" stroke-width="1"/><path d="M747.5 510V507" stroke="#000" stroke-width="1"/><path d="M775.5 510V505" stroke="#000" stroke-width="1"/><path d="M803.5 510V507" stroke="#000" stroke-width="1"/><path d="M831.5 510V507" stroke="#000" stroke-width="1"/><path d="M859.5 510V505" stroke="#000" stroke-width="1"/><path d="M887.5 510V507" stroke="#000" stroke-width="1"/><path d="M915.5 510V507" stroke="#000" stroke-width="1"/><path d="M943.5 510V505" stroke="#000" stroke-width="1"/><path d="M971.5 510V507" stroke="#000" stroke-width="1"/><path d="M999.5 510V507" stroke="#000" stroke-width="1"/><path d="M1028.5 510V505" stroke="#000" stroke-width="1"/><path d="M1056.5 510V507" stroke="#000" stroke-width="1"/><path d="M1084.5 510V507" stroke="#000" stroke-width="1"/><path d="M1112.5 510V505" stroke="#000" stroke-width="1"/><path d="M1140.5 510V507" stroke="#000" stroke-width="1"/><path d="M1168.5 510V507" stroke="#000" stroke-width="1"/><path d="M1196.5 510V505" stroke="#000" stroke-width="1"/><path d="M1224.5 510V507" stroke="#000" stroke-width="1"/><path d="M1252.5 510V507" stroke="#000" stroke-width="1"/><text x="694" y="218" text-anchor="end" fill="#000">1.2</text><text x="694" y="274" text-anchor="end" fill="#000">0.6</text><text x="694" y="330" text-anchor="end" fill="#000">0</text><text x="694" y="386" text-anchor="end" fill="#000">-0.6</text><text x="694" y="442" text-anchor="end" fill="#000">-1.2</text><text x="694" y="498" text-anchor="end" fill="#000">-1.8</text><text x="775.5" y="527.5" text-anchor="middle" fill="#000">-18</text><text x="859.5" y="527.5" text-anchor="middle" fill="#000">-12</text><text x="943.5" y="527.5" text-anchor="middle" fill="#000">-6</text><text x="1028.5" y="527.5" text-anchor="middle" fill="#000">0</text><text x="1112.5" y="527.5" text-anchor="middle" fill="#000">6</text><text x="1196.5" y="527.5" text-anchor="middle" fill="#000">12</text><polyline points="788.71,325.50 788.99,325.50 789.27,325.50 789.55,325.50 789.83,325.50 790.11,325.50 790.39,325.50 790.67,325.50 790.95,325.50 791.23,325.50 791.51,325.50 791.79,325.50 792.08,325.50 792.36,325.50 792.64,325.50 792.92,325.50 793.20,325.50 793.48,325.50 793.76,325.50 794.04,325.50 794.32,325.50 794.60,325.50 794.88,325.50 795.16,325.50 795.44,325.50 795.72,325.50 796.00,325.50 796.28,325.50 796.56,325.50 796.85,325.50 797.13,325.50 797.41,325.50 797.69,325.50 797.97,325.50 798.25,325.50 798.53,325.50 798.81,325.50 799.09,325.50 799.37,325.50 799.65,325.50 799.93,325.50 800.21,325.50 800.49,325.50 800.77,325.50 801.05,325.50 801.33,325.50 801.62,325.50 801.90,325.50 802.18,325.50 802.46,325.50 802.74,325.50 803.02,325.50 803.30,325.50 803.58,325.50 803.86,325.50 804.14,325.50 804.42,325.50 804.70,325.50 804.98,325.50 805.26,325.50 805.54,325.50 805.82,325.50 806.11,325.50 806.39,325.50 806.67,325.50 806.95,325.50 807.23,325.50 807.51,325.50 807.79,325.50 808.07,325.50 808.35,325.50 808.63,325.50 808.91,325.50 809.19,325.50 809.47,325.50 809.75,325.50 810.03,325.50 810.31,325.50 810.59,325.50 810.88,325.50 811.16,325.50 811.44,325.50 811.72,325.50 812.00,325.50 812.28,325.50 812.56,325.50 812.84,325.50 813.12,325.50 813.40,325.50 813.68,325.50 813.96,325.50 814.24,325.50 814.52,325.50 814.80,325.50 815.08,325.50 815.36,325.50 815.65,325.50 815.93,325.50 816.21,325.50 816.49,325.50 816.77,325.50 817.05,325.50 817.33,325.50 817.61,325.50 817.89,325.50 818.17,325.50 818.45,325.50 818.73,325.50 819.01,325.50 819.29,325.50 819.57,325.50 819.85,325.50 820.14,325.50 820.42,325.50 820.70,325.50 820.98,325.50 821.26,325.50 821.54,325.50 821.82,325.50 822.10,325.50 822.38,325.50 822.66,325.50 822.94,325.50 823.22,325.50 823.50,325.50 823.78,325.50 824.06,325.50 824.34,325.50 824.62,325.50 824.91,325.50 825.19,325.50 825.47,325.50 825.75,325.50 826.03,325.50 826.31,325.50 826.59,325.50 826.87,325.50 827.15,325.50 827.43,325.50 827.71,325.50 827.99,325.50 828.27,325.50 828.55,325.50 828.83,325.50 829.11,325.50 829.39,325.50 829.68,325.50 829.96,325.50 830.24,325.50 830.52,325.50 830.80,325.50 831.08,325.50 831.36,325.50 831.64,325.50 831.92,325.50 832.20,325.50 832.48,325.50 832.76,325.50 833.04,325.50 833.32,325.50 833.60,325.50 833.88,325.50 834.17,325.50 834.45,325.50 834.73,325.50 835.01,325.50 835.29,325.50 835.57,325.50 835.85,325.50 836.13,325.50 836.41,325.50 836.69,325.50 836.97,325.50 837.25,325.50 837.53,325.50 837.81,325.50 838.09,325.50 838.37,325.50 838.65,325.50 838.94,325.50 839.22,325.50 839.50,325.51 839.78,325.51 840.06,325.51 840.34,325.51 840.62,325.51 840.90,325.51 841.18,325.51 841.46,325.51 841.74,325.51 842.02,325.51 842.30,325.51 842.58,325.51 842.86,325.51 843.14,325.51 843.42,325.52 843.71,325.52 843.99,325.52 844.27,325.52 844.55,325.52 844.83,325.52 845.11,325.52 845.39,325.52 845.67,325.52 845.95,325.52 846.23,325.52 846.51,325.52 846.79,325.52 847.07,325.52 847.35,325.52 847.63,325.52 847.91,325.52 848.20,325.52 848.48,325.52 848.76,325.52 849.04,325.52 849.32,325.51 849.60,325.51 849.88,325.51 850.16,325.51 850.44,325.51 850.72,325.51 851.00,325.51 851.28,325.50 851.56,325.50 851.84,325.50 852.12,325.50 852.40,325.50 852.68,325.49 852.97,325.49 853.25,325.49 853.53,325.49 853.81,325.48 854.09,325.48 854.37,325.48 854.65,325.48 854.93,325.47 855.21,325.47 855.49,325.47 855.77,325.46 856.05,325.46 856.33,325.46 856.61,325.46 856.89,325.45 857.17,325.45 857.45,325.45 857.74,325.44 858.02,325.44 858.30,325.44 858.58,325.44 858.86,325.44 859.14,325.43 859.42,325.43 859.70,325.43 859.98,325.43 860.26,325.43 860.54,325.43 860.82,325.43 861.10,325.43 861.38,325.43 861.66,325.43 861.94,325.43 862.23,325.43 862.51,325.43 862.79,325.44 863.07,325.44 863.35,325.44 863.63,325.44 863.91,325.45 864.19,325.45 864.47,325.45 864.75,325.46 865.03,325.46 865.31,325.47 865.59,325.48 865.87,325.48 866.15,325.49 866.43,325.50 866.71,325.50 867.00,325.51 867.28,325.52 867.56,325.53 867.84,325.54 868.12,325.54 868.40,325.55 868.68,325.56 868.96,325.57 869.24,325.58 869.52,325.59 869.80,325.60 870.08,325.61 870.36,325.62 870.64,325.63 870.92,325.64 871.20,325.65 871.48,325.66 871.77,325.67 872.05,325.68 872.33,325.68 872.61,325.69 872.89,325.70 873.17,325.71 873.45,325.71 873.73,325.72 874.01,325.72 874.29,325.73 874.57,325.73 874.85,325.73 875.13,325.73 875.41,325.74 875.69,325.74 875.97,325.73 876.26,325.73 876.54,325.73 876.82,325.73 877.10,325.72 877.38,325.71 877.66,325.71 877.94,325.70 878.22,325.69 878.50,325.68 878.78,325.66 879.06,325.65 879.34,325.63 879.62,325.62 879.90,325.60 880.18,325.58 880.46,325.56 880.74,325.54 881.03,325.52 881.31,325.50 881.59,325.47 881.87,325.45 882.15,325.42 882.43,325.40 882.71,325.37 882.99,325.34 883.27,325.31 883.55,325.29 883.83,325.26 884.11,325.23 884.39,325.20 884.67,325.17 884.95,325.14 885.23,325.11 885.51,325.08 885.80,325.06 886.08,325.03 886.36,325.00 886.64,324.98 886.92,324.95 887.20,324.93 887.48,324.91 887.76,324.89 888.04,324.87 888.32,324.85 888.60,324.84 888.88,324.83 889.16,324.82 889.44,324.81 889.72,324.80 890.00,324.80 890.29,324.80 890.57,324.81 890.85,324.81 891.13,324.82 891.41,324.83 891.69,324.85 891.97,324.87 892.25,324.89 892.53,324.92 892.81,324.95 893.09,324.98 893.37,325.01 893.65,325.05 893.93,325.10 894.21,325.14 894.49,325.19 894.77,325.24 895.06,325.30 895.34,325.36 895.62,325.42 895.90,325.48 896.18,325.55 896.46,325.62 896.74,325.69 897.02,325.76 897.30,325.84 897.58,325.91 897.86,325.99 898.14,326.07 898.42,326.15 898.70,326.23 898.98,326.31 899.26,326.39 899.54,326.46 899.83,326.54 900.11,326.62 900.39,326.69 900.67,326.76 900.95,326.83 901.23,326.90 901.51,326.97 901.79,327.03 902.07,327.08 902.35,327.13 902.63,327.18 902.91,327.22 903.19,327.26 903.47,327.29 903.75,327.32 904.03,327.34 904.32,327.35 904.60,327.35 904.88,327.35 905.16,327.34 905.44,327.32 905.72,327.30 906.00,327.27 906.28,327.22 906.56,327.17 906.84,327.11 907.12,327.05 907.40,326.97 907.68,326.89 907.96,326.79 908.24,326.69 908.52,326.58 908.80,326.47 909.09,326.34 909.37,326.21 909.65,326.07 909.93,325.92 910.21,325.76 910.49,325.60 910.77,325.44 911.05,325.26 911.33,325.09 911.61,324.91 911.89,324.72 912.17,324.53 912.45,324.34 912.73,324.15 913.01,323.95 913.29,323.76 913.57,323.57 913.86,323.37 914.14,323.18 914.42,323.00 914.70,322.81 914.98,322.63 915.26,322.46 915.54,322.29 915.82,322.13 916.10,321.98 916.38,321.84 916.66,321.70 916.94,321.58 917.22,321.47 917.50,321.37 917.78,321.29 918.06,321.22 918.35,321.16 918.63,321.12 918.91,321.09 919.19,321.08 919.47,321.09 919.75,321.12 920.03,321.16 920.31,321.22 920.59,321.30 920.87,321.40 921.15,321.52 921.43,321.66 921.71,321.82 921.99,322.00 922.27,322.20 922.55,322.41 922.83,322.65 923.12,322.90 923.40,323.17 923.68,323.46 923.96,323.76 924.24,324.08 924.52,324.42 924.80,324.77 925.08,325.13 925.36,325.51 925.64,325.89 925.92,326.29 926.20,326.70 926.48,327.11 926.76,327.53 927.04,327.95 927.32,328.38 927.60,328.80 927.89,329.23 928.17,329.66 928.45,330.08 928.73,330.49 929.01,330.90 929.29,331.30 929.57,331.68 929.85,332.06 930.13,332.42 930.41,332.76 930.69,333.08 930.97,333.38 931.25,333.67 931.53,333.92 931.81,334.16 932.09,334.36 932.38,334.54 932.66,334.68 932.94,334.80 933.22,334.88 933.50,334.93 933.78,334.94 934.06,334.91 934.34,334.85 934.62,334.75 934.90,334.62 935.18,334.44 935.46,334.22 935.74,333.97 936.02,333.67 936.30,333.34 936.58,332.97 936.86,332.55 937.15,332.10 937.43,331.62 937.71,331.09 937.99,330.53 938.27,329.94 938.55,329.32 938.83,328.66 939.11,327.97 939.39,327.26 939.67,326.52 939.95,325.76 940.23,324.98 940.51,324.18 940.79,323.37 941.07,322.54 941.35,321.71 941.63,320.87 941.92,320.02 942.20,319.18 942.48,318.33 942.76,317.50 943.04,316.67 943.32,315.86 943.60,315.07 943.88,314.29 944.16,313.54 944.44,312.82 944.72,312.13 945.00,311.47 945.28,310.85 945.56,310.27 945.84,309.74 946.12,309.26 946.41,308.82 946.69,308.44 946.97,308.11 947.25,307.85 947.53,307.64 947.81,307.50 948.09,307.42 948.37,307.41 948.65,307.47 948.93,307.60 949.21,307.80 949.49,308.07 949.77,308.41 950.05,308.83 950.33,309.32 950.61,309.88 950.89,310.52 951.18,311.22 951.46,312.00 951.74,312.84 952.02,313.75 952.30,314.73 952.58,315.77 952.86,316.86 953.14,318.02 953.42,319.22 953.70,320.48 953.98,321.78 954.26,323.13 954.54,324.51 954.82,325.93 955.10,327.37 955.38,328.84 955.66,330.32 955.95,331.82 956.23,333.33 956.51,334.83 956.79,336.34 957.07,337.83 957.35,339.31 957.63,340.76 957.91,342.19 958.19,343.58 958.47,344.93 958.75,346.24 959.03,347.49 959.31,348.69 959.59,349.82 959.87,350.88 960.15,351.87 960.44,352.78 960.72,353.60 961.00,354.33 961.28,354.97 961.56,355.51 961.84,355.95 962.12,356.28 962.40,356.50 962.68,356.61 962.96,356.61 963.24,356.48 963.52,356.24 963.80,355.88 964.08,355.40 964.36,354.79 964.64,354.07 964.92,353.22 965.21,352.26 965.49,351.17 965.77,349.98 966.05,348.66 966.33,347.24 966.61,345.71 966.89,344.08 967.17,342.35 967.45,340.52 967.73,338.61 968.01,336.62 968.29,334.55 968.57,332.41 968.85,330.20 969.13,327.95 969.41,325.64 969.69,323.30 969.98,320.92 970.26,318.52 970.54,316.11 970.82,313.69 971.10,311.28 971.38,308.88 971.66,306.50 971.94,304.16 972.22,301.85 972.50,299.60 972.78,297.41 973.06,295.29 973.34,293.25 973.62,291.29 973.90,289.44 974.18,287.68 974.47,286.05 974.75,284.53 975.03,283.14 975.31,281.89 975.59,280.79 975.87,279.83 976.15,279.03 976.43,278.39 976.71,277.91 976.99,277.61 977.27,277.48 977.55,277.52 977.83,277.75 978.11,278.15 978.39,278.74 978.67,279.51 978.95,280.46 979.24,281.59 979.52,282.90 979.80,284.39 980.08,286.05 980.36,287.88 980.64,289.87 980.92,292.03 981.20,294.33 981.48,296.79 981.76,299.38 982.04,302.11 982.32,304.95 982.60,307.91 982.88,310.98 983.16,314.14 983.44,317.38 983.72,320.69 984.01,324.07 984.29,327.49 984.57,330.95 984.85,334.43 985.13,337.92 985.41,341.40 985.69,344.88 985.97,348.32 986.25,351.72 986.53,355.06 986.81,358.34 987.09,361.53 987.37,364.63 987.65,367.61 987.93,370.48 988.21,373.22 988.50,375.81 988.78,378.24 989.06,380.51 989.34,382.59 989.62,384.50 989.90,386.20 990.18,387.70 990.46,388.99 990.74,390.05 991.02,390.89 991.30,391.50 991.58,391.87 991.86,392.00 992.14,391.89 992.42,391.53 992.70,390.92 992.98,390.07 993.27,388.97 993.55,387.62 993.83,386.04 994.11,384.21 994.39,382.15 994.67,379.87 994.95,377.36 995.23,374.63 995.51,371.70 995.79,368.57 996.07,365.26 996.35,361.77 996.63,358.11 996.91,354.30 997.19,350.35 997.47,346.27 997.75,342.08 998.04,337.80 998.32,333.43 998.60,329.00 998.88,324.51 999.16,319.99 999.44,315.46 999.72,310.92 1000.00,306.40 1000.28,301.91 1000.56,297.48 1000.84,293.11 1001.12,288.82 1001.40,284.64 1001.68,280.58 1001.96,276.64 1002.24,272.86 1002.53,269.25 1002.81,265.81 1003.09,262.57 1003.37,259.53 1003.65,256.72 1003.93,254.13 1004.21,251.79 1004.49,249.71 1004.77,247.89 1005.05,246.34 1005.33,245.07 1005.61,244.08 1005.89,243.39 1006.17,242.99 1006.45,242.90 1006.73,243.10 1007.01,243.61 1007.30,244.42 1007.58,245.53 1007.86,246.94 1008.14,248.65 1008.42,250.64 1008.70,252.93 1008.98,255.49 1009.26,258.32 1009.54,261.41 1009.82,264.75 1010.10,268.33 1010.38,272.14 1010.66,276.17 1010.94,280.39 1011.22,284.80 1011.50,289.38 1011.78,294.11 1012.07,298.98 1012.35,303.97 1012.63,309.06 1012.91,314.24 1013.19,319.48 1013.47,324.76 1013.75,330.06 1014.03,335.38 1014.31,340.67 1014.59,345.94 1014.87,351.15 1015.15,356.28 1015.43,361.32 1015.71,366.25 1015.99,371.05 1016.27,375.70 1016.56,380.18 1016.84,384.48 1017.12,388.58 1017.40,392.46 1017.68,396.10 1017.96,399.50 1018.24,402.64 1018.52,405.51 1018.80,408.10 1019.08,410.39 1019.36,412.37 1019.64,414.05 1019.92,415.41 1020.20,416.44 1020.48,417.14 1020.76,417.51 1021.04,417.55 1021.33,417.25 1021.61,416.61 1021.89,415.65 1022.17,414.35 1022.45,412.73 1022.73,410.78 1023.01,408.53 1023.29,405.96 1023.57,403.10 1023.85,399.96 1024.13,396.54 1024.41,392.85 1024.69,388.92 1024.97,384.75 1025.25,380.36 1025.53,375.77 1025.81,371.00 1026.10,366.05 1026.38,360.95 1026.66,355.72 1026.94,350.38 1027.22,344.95 1027.50,339.45 1027.78,333.89 1028.06,328.30 1028.34,322.70 1028.62,317.11 1028.90,311.55 1029.18,306.05 1029.46,300.62 1029.74,295.28 1030.02,290.05 1030.30,284.95 1030.59,280.00 1030.87,275.23 1031.15,270.64 1031.43,266.25 1031.71,262.08 1031.99,258.15 1032.27,254.46 1032.55,251.04 1032.83,247.90 1033.11,245.04 1033.39,242.47 1033.67,240.22 1033.95,238.27 1034.23,236.65 1034.51,235.35 1034.79,234.39 1035.07,233.75 1035.36,233.45 1035.64,233.49 1035.92,233.86 1036.20,234.56 1036.48,235.59 1036.76,236.95 1037.04,238.63 1037.32,240.61 1037.60,242.90 1037.88,245.49 1038.16,248.36 1038.44,251.50 1038.72,254.90 1039.00,258.54 1039.28,262.42 1039.56,266.52 1039.84,270.82 1040.13,275.30 1040.41,279.95 1040.69,284.75 1040.97,289.68 1041.25,294.72 1041.53,299.85 1041.81,305.06 1042.09,310.33 1042.37,315.62 1042.65,320.94 1042.93,326.24 1043.21,331.52 1043.49,336.76 1043.77,341.94 1044.05,347.03 1044.33,352.02 1044.62,356.89 1044.90,361.62 1045.18,366.20 1045.46,370.61 1045.74,374.83 1046.02,378.86 1046.30,382.67 1046.58,386.25 1046.86,389.59 1047.14,392.68 1047.42,395.51 1047.70,398.07 1047.98,400.36 1048.26,402.35 1048.54,404.06 1048.82,405.47 1049.10,406.58 1049.39,407.39 1049.67,407.90 1049.95,408.10 1050.23,408.01 1050.51,407.61 1050.79,406.92 1051.07,405.93 1051.35,404.66 1051.63,403.11 1051.91,401.29 1052.19,399.21 1052.47,396.87 1052.75,394.28 1053.03,391.47 1053.31,388.43 1053.59,385.19 1053.87,381.75 1054.16,378.14 1054.44,374.36 1054.72,370.42 1055.00,366.36 1055.28,362.18 1055.56,357.89 1055.84,353.52 1056.12,349.09 1056.40,344.60 1056.68,340.08 1056.96,335.54 1057.24,331.01 1057.52,326.49 1057.80,322.00 1058.08,317.57 1058.36,313.20 1058.65,308.92 1058.93,304.73 1059.21,300.65 1059.49,296.70 1059.77,292.89 1060.05,289.23 1060.33,285.74 1060.61,282.43 1060.89,279.30 1061.17,276.37 1061.45,273.64 1061.73,271.13 1062.01,268.85 1062.29,266.79 1062.57,264.96 1062.85,263.38 1063.13,262.03 1063.42,260.93 1063.70,260.08 1063.98,259.47 1064.26,259.11 1064.54,259.00 1064.82,259.13 1065.10,259.50 1065.38,260.11 1065.66,260.95 1065.94,262.01 1066.22,263.30 1066.50,264.80 1066.78,266.50 1067.06,268.41 1067.34,270.49 1067.62,272.76 1067.90,275.19 1068.19,277.78 1068.47,280.52 1068.75,283.39 1069.03,286.37 1069.31,289.47 1069.59,292.66 1069.87,295.94 1070.15,299.28 1070.43,302.68 1070.71,306.12 1070.99,309.60 1071.27,313.08 1071.55,316.57 1071.83,320.05 1072.11,323.51 1072.39,326.93 1072.68,330.31 1072.96,333.62 1073.24,336.86 1073.52,340.02 1073.80,343.09 1074.08,346.05 1074.36,348.89 1074.64,351.62 1074.92,354.21 1075.20,356.67 1075.48,358.97 1075.76,361.13 1076.04,363.12 1076.32,364.95 1076.60,366.61 1076.88,368.10 1077.16,369.41 1077.45,370.54 1077.73,371.49 1078.01,372.26 1078.29,372.85 1078.57,373.25 1078.85,373.48 1079.13,373.52 1079.41,373.39 1079.69,373.09 1079.97,372.61 1080.25,371.97 1080.53,371.17 1080.81,370.21 1081.09,369.11 1081.37,367.86 1081.65,366.47 1081.93,364.95 1082.22,363.32 1082.50,361.56 1082.78,359.71 1083.06,357.75 1083.34,355.71 1083.62,353.59 1083.90,351.40 1084.18,349.15 1084.46,346.84 1084.74,344.50 1085.02,342.12 1085.30,339.72 1085.58,337.31 1085.86,334.89 1086.14,332.48 1086.42,330.08 1086.71,327.70 1086.99,325.36 1087.27,323.05 1087.55,320.80 1087.83,318.59 1088.11,316.45 1088.39,314.38 1088.67,312.39 1088.95,310.48 1089.23,308.65 1089.51,306.92 1089.79,305.29 1090.07,303.76 1090.35,302.34 1090.63,301.02 1090.91,299.83 1091.19,298.74 1091.48,297.78 1091.76,296.93 1092.04,296.21 1092.32,295.60 1092.60,295.12 1092.88,294.76 1093.16,294.52 1093.44,294.39 1093.72,294.39 1094.00,294.50 1094.28,294.72 1094.56,295.05 1094.84,295.49 1095.12,296.03 1095.40,296.67 1095.68,297.40 1095.96,298.22 1096.25,299.13 1096.53,300.12 1096.81,301.18 1097.09,302.31 1097.37,303.51 1097.65,304.76 1097.93,306.07 1098.21,307.42 1098.49,308.81 1098.77,310.24 1099.05,311.69 1099.33,313.17 1099.61,314.66 1099.89,316.17 1100.17,317.67 1100.45,319.18 1100.74,320.68 1101.02,322.16 1101.30,323.63 1101.58,325.07 1101.86,326.49 1102.14,327.87 1102.42,329.22 1102.70,330.52 1102.98,331.78 1103.26,332.98 1103.54,334.14 1103.82,335.23 1104.10,336.27 1104.38,337.25 1104.66,338.16 1104.94,339.00 1105.22,339.78 1105.51,340.48 1105.79,341.12 1106.07,341.68 1106.35,342.17 1106.63,342.59 1106.91,342.93 1107.19,343.20 1107.47,343.40 1107.75,343.53 1108.03,343.59 1108.31,343.58 1108.59,343.50 1108.87,343.36 1109.15,343.15 1109.43,342.89 1109.71,342.56 1109.99,342.18 1110.28,341.74 1110.56,341.26 1110.84,340.73 1111.12,340.15 1111.40,339.53 1111.68,338.87 1111.96,338.18 1112.24,337.46 1112.52,336.71 1112.80,335.93 1113.08,335.14 1113.36,334.33 1113.64,333.50 1113.92,332.67 1114.20,331.82 1114.48,330.98 1114.77,330.13 1115.05,329.29 1115.33,328.46 1115.61,327.63 1115.89,326.82 1116.17,326.02 1116.45,325.24 1116.73,324.48 1117.01,323.74 1117.29,323.03 1117.57,322.34 1117.85,321.68 1118.13,321.06 1118.41,320.47 1118.69,319.91 1118.97,319.38 1119.25,318.90 1119.54,318.45 1119.82,318.03 1120.10,317.66 1120.38,317.33 1120.66,317.03 1120.94,316.78 1121.22,316.56 1121.50,316.38 1121.78,316.25 1122.06,316.15 1122.34,316.09 1122.62,316.06 1122.90,316.07 1123.18,316.12 1123.46,316.20 1123.74,316.32 1124.02,316.46 1124.31,316.64 1124.59,316.84 1124.87,317.08 1125.15,317.33 1125.43,317.62 1125.71,317.92 1125.99,318.24 1126.27,318.58 1126.55,318.94 1126.83,319.32 1127.11,319.70 1127.39,320.10 1127.67,320.51 1127.95,320.92 1128.23,321.34 1128.51,321.77 1128.80,322.20 1129.08,322.62 1129.36,323.05 1129.64,323.47 1129.92,323.89 1130.20,324.30 1130.48,324.71 1130.76,325.11 1131.04,325.49 1131.32,325.87 1131.60,326.23 1131.88,326.58 1132.16,326.92 1132.44,327.24 1132.72,327.54 1133.00,327.83 1133.28,328.10 1133.57,328.35 1133.85,328.59 1134.13,328.80 1134.41,329.00 1134.69,329.18 1134.97,329.34 1135.25,329.48 1135.53,329.60 1135.81,329.70 1136.09,329.78 1136.37,329.84 1136.65,329.88 1136.93,329.91 1137.21,329.92 1137.49,329.91 1137.77,329.88 1138.05,329.84 1138.34,329.78 1138.62,329.71 1138.90,329.63 1139.18,329.53 1139.46,329.42 1139.74,329.30 1140.02,329.16 1140.30,329.02 1140.58,328.87 1140.86,328.71 1141.14,328.54 1141.42,328.37 1141.70,328.19 1141.98,328.00 1142.26,327.82 1142.54,327.63 1142.83,327.43 1143.11,327.24 1143.39,327.05 1143.67,326.85 1143.95,326.66 1144.23,326.47 1144.51,326.28 1144.79,326.09 1145.07,325.91 1145.35,325.74 1145.63,325.56 1145.91,325.40 1146.19,325.24 1146.47,325.08 1146.75,324.93 1147.03,324.79 1147.31,324.66 1147.60,324.53 1147.88,324.42 1148.16,324.31 1148.44,324.21 1148.72,324.11 1149.00,324.03 1149.28,323.95 1149.56,323.89 1149.84,323.83 1150.12,323.78 1150.40,323.73 1150.68,323.70 1150.96,323.68 1151.24,323.66 1151.52,323.65 1151.80,323.65 1152.08,323.65 1152.37,323.66 1152.65,323.68 1152.93,323.71 1153.21,323.74 1153.49,323.78 1153.77,323.82 1154.05,323.87 1154.33,323.92 1154.61,323.97 1154.89,324.03 1155.17,324.10 1155.45,324.17 1155.73,324.24 1156.01,324.31 1156.29,324.38 1156.57,324.46 1156.86,324.54 1157.14,324.61 1157.42,324.69 1157.70,324.77 1157.98,324.85 1158.26,324.93 1158.54,325.01 1158.82,325.09 1159.10,325.16 1159.38,325.24 1159.66,325.31 1159.94,325.38 1160.22,325.45 1160.50,325.52 1160.78,325.58 1161.06,325.64 1161.34,325.70 1161.63,325.76 1161.91,325.81 1162.19,325.86 1162.47,325.90 1162.75,325.95 1163.03,325.99 1163.31,326.02 1163.59,326.05 1163.87,326.08 1164.15,326.11 1164.43,326.13 1164.71,326.15 1164.99,326.17 1165.27,326.18 1165.55,326.19 1165.83,326.19 1166.11,326.20 1166.40,326.20 1166.68,326.20 1166.96,326.19 1167.24,326.18 1167.52,326.17 1167.80,326.16 1168.08,326.15 1168.36,326.13 1168.64,326.11 1168.92,326.09 1169.20,326.07 1169.48,326.05 1169.76,326.02 1170.04,326.00 1170.32,325.97 1170.60,325.94 1170.89,325.92 1171.17,325.89 1171.45,325.86 1171.73,325.83 1172.01,325.80 1172.29,325.77 1172.57,325.74 1172.85,325.71 1173.13,325.69 1173.41,325.66 1173.69,325.63 1173.97,325.60 1174.25,325.58 1174.53,325.55 1174.81,325.53 1175.09,325.50 1175.37,325.48 1175.66,325.46 1175.94,325.44 1176.22,325.42 1176.50,325.40 1176.78,325.38 1177.06,325.37 1177.34,325.35 1177.62,325.34 1177.90,325.32 1178.18,325.31 1178.46,325.30 1178.74,325.29 1179.02,325.29 1179.30,325.28 1179.58,325.27 1179.86,325.27 1180.14,325.27 1180.43,325.27 1180.71,325.26 1180.99,325.26 1181.27,325.27 1181.55,325.27 1181.83,325.27 1182.11,325.27 1182.39,325.28 1182.67,325.28 1182.95,325.29 1183.23,325.29 1183.51,325.30 1183.79,325.31 1184.07,325.32 1184.35,325.32 1184.63,325.33 1184.92,325.34 1185.20,325.35 1185.48,325.36 1185.76,325.37 1186.04,325.38 1186.32,325.39 1186.60,325.40 1186.88,325.41 1187.16,325.42 1187.44,325.43 1187.72,325.44 1188.00,325.45 1188.28,325.46 1188.56,325.46 1188.84,325.47 1189.12,325.48 1189.40,325.49 1189.69,325.50 1189.97,325.50 1190.25,325.51 1190.53,325.52 1190.81,325.52 1191.09,325.53 1191.37,325.54 1191.65,325.54 1191.93,325.55 1192.21,325.55 1192.49,325.55 1192.77,325.56 1193.05,325.56 1193.33,325.56 1193.61,325.56 1193.89,325.57 1194.17,325.57 1194.46,325.57 1194.74,325.57 1195.02,325.57 1195.30,325.57 1195.58,325.57 1195.86,325.57 1196.14,325.57 1196.42,325.57 1196.70,325.57 1196.98,325.57 1197.26,325.57 1197.54,325.56 1197.82,325.56 1198.10,325.56 1198.38,325.56 1198.66,325.56 1198.95,325.55 1199.23,325.55 1199.51,325.55 1199.79,325.54 1200.07,325.54 1200.35,325.54 1200.63,325.54 1200.91,325.53 1201.19,325.53 1201.47,325.53 1201.75,325.52 1202.03,325.52 1202.31,325.52 1202.59,325.52 1202.87,325.51 1203.15,325.51 1203.43,325.51 1203.72,325.51 1204.00,325.50 1204.28,325.50 1204.56,325.50 1204.84,325.50 1205.12,325.50 1205.40,325.49 1205.68,325.49 1205.96,325.49 1206.24,325.49 1206.52,325.49 1206.80,325.49 1207.08,325.49 1207.36,325.48 1207.64,325.48 1207.92,325.48 1208.20,325.48 1208.49,325.48 1208.77,325.48 1209.05,325.48 1209.33,325.48 1209.61,325.48 1209.89,325.48 1210.17,325.48 1210.45,325.48 1210.73,325.48 1211.01,325.48 1211.29,325.48 1211.57,325.48 1211.85,325.48 1212.13,325.48 1212.41,325.48 1212.69,325.48 1212.98,325.48 1213.26,325.49 1213.54,325.49 1213.82,325.49 1214.10,325.49 1214.38,325.49 1214.66,325.49 1214.94,325.49 1215.22,325.49 1215.50,325.49 1215.78,325.49 1216.06,325.49 1216.34,325.49 1216.62,325.49 1216.90,325.49 1217.18,325.50 1217.46,325.50 1217.75,325.50 1218.03,325.50 1218.31,325.50 1218.59,325.50 1218.87,325.50 1219.15,325.50 1219.43,325.50 1219.71,325.50 1219.99,325.50 1220.27,325.50 1220.55,325.50 1220.83,325.50 1221.11,325.50 1221.39,325.50 1221.67,325.50 1221.95,325.50 1222.23,325.50 1222.52,325.50 1222.80,325.50 1223.08,325.50 1223.36,325.50 1223.64,325.50 1223.92,325.50 1224.20,325.50 1224.48,325.50 1224.76,325.50 1225.04,325.50 1225.32,325.50 1225.60,325.50 1225.88,325.50 1226.16,325.50 1226.44,325.50 1226.72,325.50 1227.01,325.50 1227.29,325.50 1227.57,325.50 1227.85,325.50 1228.13,325.50 1228.41,325.50 1228.69,325.50 1228.97,325.50 1229.25,325.50 1229.53,325.50 1229.81,325.50 1230.09,325.50 1230.37,325.50 1230.65,325.50 1230.93,325.50 1231.21,325.50 1231.49,325.50 1231.78,325.50 1232.06,325.50 1232.34,325.50 1232.62,325.50 1232.90,325.50 1233.18,325.50 1233.46,325.50 1233.74,325.50 1234.02,325.50 1234.30,325.50 1234.58,325.50 1234.86,325.50 1235.14,325.50 1235.42,325.50 1235.70,325.50 1235.98,325.50 1236.26,325.50 1236.55,325.50 1236.83,325.50 1237.11,325.50 1237.39,325.50 1237.67,325.50 1237.95,325.50 1238.23,325.50 1238.51,325.50 1238.79,325.50 1239.07,325.50 1239.35,325.50 1239.63,325.50 1239.91,325.50 1240.19,325.50 1240.47,325.50 1240.75,325.50 1241.04,325.50 1241.32,325.50 1241.60,325.50 1241.88,325.50 1242.16,325.50 1242.44,325.50 1242.72,325.50 1243.00,325.50 1243.28,325.50 1243.56,325.50 1243.84,325.50 1244.12,325.50 1244.40,325.50 1244.68,325.50 1244.96,325.50 1245.24,325.50 1245.52,325.50 1245.81,325.50 1246.09,325.50 1246.37,325.50 1246.65,325.50 1246.93,325.50 1247.21,325.50 1247.49,325.50 1247.77,325.50 1248.05,325.50 1248.33,325.50 1248.61,325.50 1248.89,325.50 1249.17,325.50 1249.45,325.50 1249.73,325.50 1250.01,325.50 1250.29,325.50 1250.58,325.50 1250.86,325.50 1251.14,325.50 1251.42,325.50 1251.70,325.50 1251.98,325.50 1252.26,325.50 1252.54,325.50 1252.82,325.50 1253.10,325.50 1253.38,325.50 1253.66,325.50 1253.94,325.50 1254.22,325.50 1254.50,325.50 1254.78,325.50 1255.07,325.50 1255.35,325.50 1255.63,325.50 1255.91,325.50 1256.19,325.50 1256.47,325.50 1256.75,325.50 1257.03,325.50 1257.31,325.50 1257.59,325.50 1257.87,325.50 1258.15,325.50 1258.43,325.50 1258.71,325.50 1258.99,325.50 1259.27,325.50 1259.55,325.50 1259.84,325.50 1260.12,325.50 1260.40,325.50 1260.68,325.50 1260.96,325.50 1261.24,325.50" fill="none" stroke="#2424ff" stroke-width="1.1"/><circle cx="1049.8" cy="407.5" r="4" fill="#ff1010"/><circle cx="1105.2" cy="340.2" r="4" fill="#10e010"/><text x="1028.5" y="195.5" text-anchor="middle" fill="#000">Wavepacket</text><path d="M916.0 220.5C919.0 213 930.0 211 945.0 211 965.0 211 990.0 213.6 1010.0 213.6 1020.0 213.6 1025.0 212 1028.3 209.6L1028.3 212C1024.0 215.5 1018.0 216.6 1005.0 216.6 985.0 216.6 962.0 214.6 945.0 214.3 930.0 214 921.0 215 916.5 221Z M1140.6 220.5C1137.6 213 1126.6 211 1111.6 211 1091.6 211 1066.6 213.6 1046.6 213.6 1036.6 213.6 1031.6 212 1028.3 209.6L1028.3 212C1032.6 215.5 1038.6 216.6 1051.6 216.6 1071.6 216.6 1094.6 214.6 1111.6 214.3 1126.6 214 1135.6 215 1140.1 221Z" fill="#000" stroke="#000" stroke-width="0.4"/><path d="M1145.5 243V286" stroke="#000" stroke-width="1.2"/><text x="1153" y="252" font-size="12.5" fill="#000">Fixed positions in</text><text x="1153" y="268" font-size="12.5" fill="#000">wave packet define</text><text x="1153" y="284" font-size="12.5" fill="#000">group velocity vg</text><path d="M1145 264.5C1130 264 1114 262 1109 264C1106 266 1105.5 272 1105.3 280" fill="none" stroke="#000" stroke-width="1"/><path d="M1100 278L1105.3 290L1110.5 278Q1105.3 281 1100 278z" fill="#000"/><path d="M1157.5 448V491" stroke="#000" stroke-width="1.2"/><text x="1165" y="458" font-size="12.3" fill="#000">Points of fixed</text><text x="1165" y="474" font-size="12.3" fill="#000">phase define</text><text x="1165" y="490" font-size="12.3" fill="#000">phase velocity vp</text><path d="M1157 470C1125 470 1095 458 1066 425" fill="none" stroke="#000" stroke-width="1"/><g transform="translate(1059 418) rotate(48)"><path d="M0 0L12 -5.5Q9 0 12 5.5z" fill="#000"/></g><path d="M1042.5 427.7C1036 431 1028 431 1021 426.5C1005 416 990 400 969 383.4C950 368 925 354 895 345.5" fill="none" stroke="#000" stroke-width="1"/><g transform="translate(887.4 344.1) rotate(15)"><path d="M0 0L12 -5.5Q9 0 12 5.5z" fill="#000"/></g><text x="949" y="408.5" text-anchor="middle" font-size="13" fill="#000" transform="rotate(39 949 404)">Dispersion with</text><text x="938" y="422.5" text-anchor="middle" font-size="13" fill="#000" transform="rotate(39 938 418)">vp &lt; vg</text></svg><div class="abs" style="left:1234px;top:135px;width:19px;height:19px;border-radius:2px;background:#31363b"></div><svg style="left:1236px;top:137px" width="15" height="15" viewBox="0 0 15 15"><path d="M7.5 2v11M2 7.5h11" stroke="#fff" stroke-width="1.1"/></svg><div class="abs" style="left:1256px;top:135px;width:19px;height:19px;border-radius:2px;background:#31363b"></div><svg style="left:1258px;top:137px" width="15" height="15" viewBox="0 0 15 15"><circle cx="7.5" cy="7.5" r="5.8" fill="none" stroke="#da4453" stroke-width="1.1"/><path d="M3.5 3.5l8 8" stroke="#da4453" stroke-width="1.1"/></svg><div class="abs" style="left:49px;top:543px;width:1231px;height:157px;border:1px solid #5e6266;border-radius:3px;background:#31363b"></div><div class="t" style="left:54px;top:550px">Project Explorer</div><svg style="left:1236px;top:551px" width="10" height="10" viewBox="0 0 10 10"><path d="M5 0.8L9.2 5 5 9.2 0.8 5z" fill="none" stroke="#eff0f1" stroke-width="1"/></svg><svg style="left:1255px;top:547px" width="18" height="18" viewBox="0 0 18 18"><circle cx="9" cy="9" r="8.2" fill="#9fa1a3"/><path d="M5 5l8 8M13 5l-8 8" stroke="#2a2e32" stroke-width="1.2"/></svg><div class="abs" style="left:51px;top:573px;width:153px;height:124px;border:1px solid #5e6266;border-radius:2px;background:#232629"></div><div class="abs" style="left:72px;top:574px;width:130px;height:20px;background:#3daee9"></div><svg style="left:72px;top:575px" width="18" height="16" viewBox="0 0 18 16"><defs><linearGradient id="fg" x1="0" y1="0" x2="1" y2="1"><stop offset="0" stop-color="#ffe24a"/><stop offset="1" stop-color="#f9a80a"/></linearGradient></defs><path d="M1.2 1.6q0-0.6 0.6-0.6h3.5l0.6 0.6h8.1v2.2h-12.8z" fill="#b7740c"/><path d="M1.2 3h3.8l-1.5 12h-2.3z" fill="#4a3320"/><path d="M4.9 4.9L16.9 3L15 12.9L3 14.7z" fill="url(#fg)"/></svg><div class="t" style="left:90px;top:577px">UNTITLED</div><div class="abs" style="left:206px;top:573px;width:1071px;height:124px;border:1px solid #5e6266;border-radius:2px;background:#232629;overflow:hidden"></div><div class="abs" style="left:207px;top:574px;width:1069px;height:24px;background:#31363b;border-bottom:1px solid #4a4f54"></div><div class="abs" style="left:273px;top:574px;width:1px;height:23px;background:#4a4f54"></div><div class="abs" style="left:335px;top:574px;width:1px;height:23px;background:#4a4f54"></div><div class="abs" style="left:406px;top:574px;width:1px;height:23px;background:#4a4f54"></div><div class="abs" style="left:507px;top:574px;width:1px;height:23px;background:#4a4f54"></div><div class="t" style="left:213px;top:579px">Name</div><div class="t" style="left:280px;top:579px">Type</div><div class="t" style="left:342px;top:579px">View</div><div class="t" style="left:413px;top:579px">Created</div><div class="t" style="left:514px;top:579px">Label</div><svg style="left:210px;top:602px" width="12" height="12" viewBox="0 0 12 12"><path d="M0.5 0.5h11v11h-11zM0.5 4h11M0.5 7.5h11M4 0.5v11M7.5 0.5v11" fill="none" stroke="#eff0f1"/><rect x="1" y="1" width="2.6" height="2.6" fill="#3daee9"/></svg><svg style="left:210px;top:622px" width="12" height="12" viewBox="0 0 12 12"><path d="M1 2l3 3 3-3 3 2 1.5-2v9.5h-10.5z" fill="#9a9c9e"/><path d="M1 7l3 2 3-2 3 3 1.5-1" fill="none" stroke="#eff0f1"/><path d="M0.5 0v11.5h11.5" fill="none" stroke="#eff0f1"/></svg><div class="t" style="left:225px;top:601px">Table1</div><div class="t" style="left:275px;top:601px">Table</div><div class="t" style="left:337px;top:601px">Normal</div><div class="t" style="left:408px;top:601px">4/11/16 3:59 AM</div><div class="t" style="left:225px;top:621px">test</div><div class="t" style="left:275px;top:621px">Graph</div><div class="t" style="left:337px;top:621px">Normal</div><div class="t" style="left:408px;top:621px">4/11/16 4:33 AM</div><div class="abs" style="left:159px;top:700px;width:122px;height:28px;background:#4d5257;border-radius:0 0 2px 2px"></div><div class="abs" style="left:281px;top:700px;width:85px;height:28px;background:#4d5257;border-left:1px solid #3f4449;border-radius:0 0 3px 0"></div><div class="abs" style="left:48px;top:699px;width:112px;height:29px;border:1px solid #5e6266;border-top:none;border-radius:0 0 3px 3px;background:#31363b"></div><div class="t" style="left:56px;top:707px">Project Explorer</div><div class="t" style="left:168px;top:707px">Scripting Console</div><div class="t" style="left:289px;top:707px">Results Log</div><svg style="left:955px;top:700px" width="325" height="40" viewBox="955 700 325 40"><text x="962" y="731.5" font-family="Liberation Sans" font-weight="bold" font-size="36" textLength="70" lengthAdjust="spacingAndGlyphs" fill="#4b7a37">lime</text><text x="1036" y="731.5" font-family="Liberation Sans" font-size="36" textLength="237" lengthAdjust="spacingAndGlyphs" fill="none" stroke="#1e2225" stroke-width="1.1">download.com</text></svg></body></html>
